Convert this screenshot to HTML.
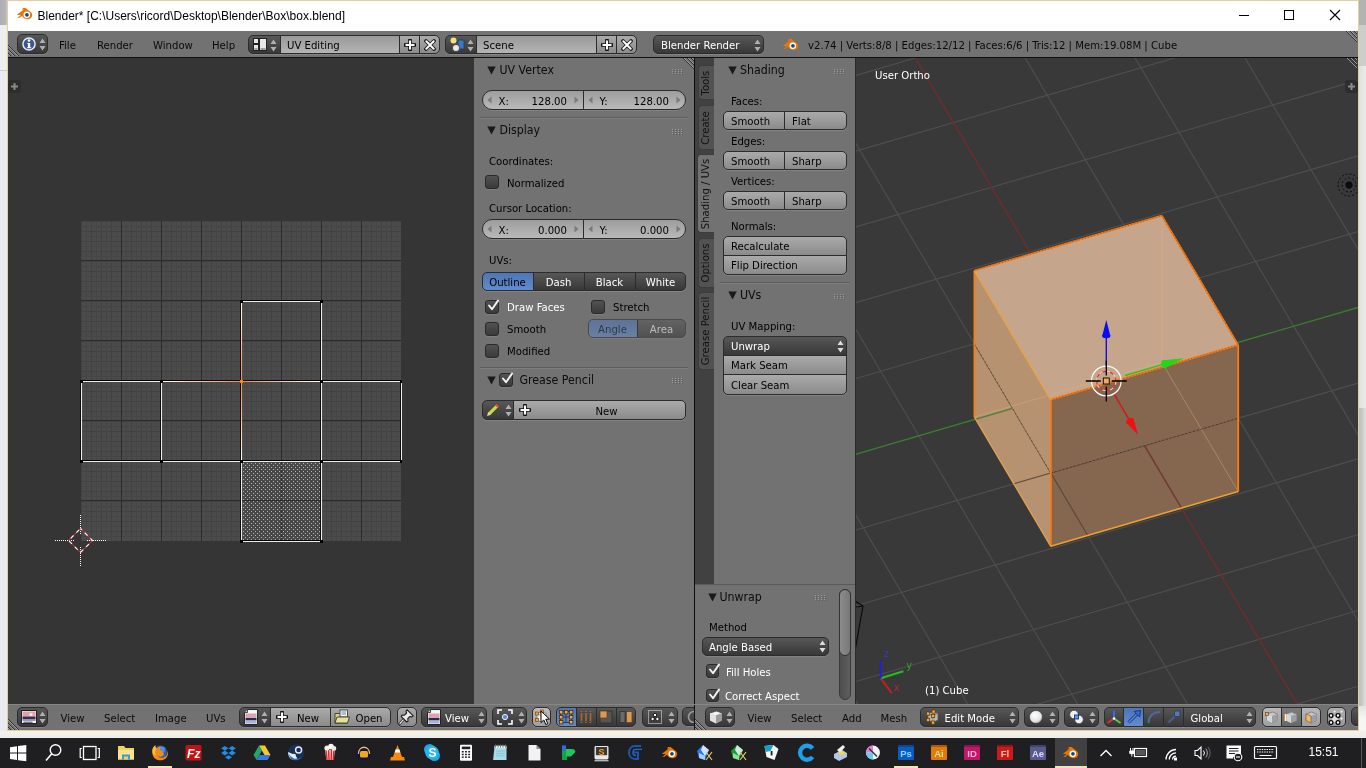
<!DOCTYPE html>
<html><head><meta charset="utf-8"><title>Blender</title>
<style>
*{box-sizing:border-box;margin:0;padding:0}
html,body{width:1366px;height:768px;overflow:hidden}
body{position:relative;background:#f2f2f2;font-family:"DejaVu Sans Condensed","DejaVu Sans","Liberation Sans",sans-serif;font-size:11.25px;font-stretch:condensed;color:#000}
#root{position:absolute;left:0;top:0;width:1366px;height:768px;will-change:transform}
.a,.t,.w,svg{position:absolute}
.t{white-space:nowrap;line-height:1}
.w{border:1px solid #2c2c2c;white-space:nowrap;overflow:hidden;box-shadow:0 1px 0 rgba(255,255,255,.12)}
.tool{background:linear-gradient(#aaa,#8b8b8b)}
.num{background:linear-gradient(#9d9d9d,#b9b9b9)}
.txt{background:linear-gradient(#999,#b4b4b4)}
.menu{background:linear-gradient(#575757,#383838);color:#fff}
.sel{background:linear-gradient(#4d76b8,#618bcd)}
.dis{opacity:.55}
.chk{border-radius:3px;background:linear-gradient(#525252,#3a3a3a);border:1px solid #2a2a2a;box-shadow:0 1px 0 rgba(255,255,255,.1)}
.hd{background:#727272}
.seg{font-family:"Liberation Sans",sans-serif}
</style></head>
<body>
<div id="root">
<div class="a" style="left:0px;top:0px;width:8px;height:25px;background:linear-gradient(90deg,#adadb2,#b6b6ba 70%,#d6d6d6);"></div>
<div class="a" style="left:0px;top:25px;width:8px;height:46px;background:#eeeeee;"></div>
<div class="a" style="left:0px;top:71px;width:8px;height:667px;background:#e9ebf0;"></div>
<div class="a" style="left:0px;top:70px;width:7px;height:1px;background:#cfcfcf;"></div>
<div class="a" style="left:1358px;top:0px;width:8px;height:25px;background:#b3b3b3;"></div>
<div class="a" style="left:1358px;top:25px;width:8px;height:41px;background:#cdcdcd;"></div>
<div class="a" style="left:1358px;top:66px;width:8px;height:342px;background:linear-gradient(90deg,#dedede,#ebebeb);"></div>
<div class="a" style="left:1358px;top:408px;width:8px;height:298px;background:linear-gradient(90deg,#bcbcbc,#c6c6c6 45%,#e2e2e2);"></div>
<div class="a" style="left:1358px;top:706px;width:8px;height:32px;background:linear-gradient(#e4e4e4,#f6f6f6 40%);"></div>
<div class="a" style="left:0px;top:731px;width:1366px;height:7px;background:linear-gradient(#f4f1e8,#ededed);"></div>
<div class="a" style="left:7px;top:0px;width:1352px;height:731px;background:#e3cf9d;"></div>
<div class="a" style="left:8px;top:1px;width:1350px;height:30px;background:#fff;"></div>
<div class="a" style="left:8px;top:31px;width:1350px;height:699px;background:#727272;"></div>
<svg style="left:15.6px;top:7.3px;" width="17" height="13.8125" viewBox="0 0 16 13"><path d="M1 7.2 L7.2 2.3 L5.6 2.3 L6.6 1 L9 1 L14.3 5.2 C15.6 6.4 15.6 8.6 14.3 10 C12.6 11.8 9 11.9 7 10.2 C6.3 9.6 5.9 8.9 5.8 8.2 L3.2 10.2 L1.2 10.2 L4.6 7.5 L1 7.5Z" fill="#ea7600"/><circle cx="10.2" cy="7.4" r="3.1" fill="#fff"/><circle cx="10.3" cy="7.4" r="1.75" fill="#0d4a8c"/></svg>
<span class="t seg" style="left:37.5px;top:9.8px;font-size:12px;color:#000;letter-spacing:0.0px">Blender* [C:\Users\ricord\Desktop\Blender\Box\box.blend]</span>
<svg style="left:1236px;top:8px;" width="110" height="16" viewBox="0 0 110 16"><path d="M3 7.5 H13" stroke="#000" stroke-width="1"/><rect x="48.5" y="2.5" width="9" height="9" fill="none" stroke="#000" stroke-width="1"/><path d="M94 2 L104 12 M104 2 L94 12" stroke="#000" stroke-width="1.1"/></svg>
<div class="a" style="left:8px;top:31px;width:1350px;height:26px;background:#727272;"></div>
<div class="a" style="left:8px;top:57px;width:1350px;height:1px;background:#0f0f0f;"></div>
<svg style="left:8px;top:43px;" width="13" height="13" viewBox="0 0 13 13"><path d="M0 2 L11 13" stroke="#333" stroke-width="1"/><path d="M0 3 L10 13" stroke="#9a9a9a" stroke-width="1"/><path d="M0 6 L7 13" stroke="#333" stroke-width="1"/><path d="M0 7 L6 13" stroke="#9a9a9a" stroke-width="1"/><path d="M0 10 L3 13" stroke="#333" stroke-width="1"/><path d="M0 11 L2 13" stroke="#9a9a9a" stroke-width="1"/></svg>
<svg style="left:1344px;top:31px;" width="13" height="13" viewBox="0 0 13 13"><path d="M2 0 L13 11" stroke="#333" stroke-width="1"/><path d="M3 0 L13 10" stroke="#9a9a9a" stroke-width="1"/><path d="M6 0 L13 7" stroke="#333" stroke-width="1"/><path d="M7 0 L13 6" stroke="#9a9a9a" stroke-width="1"/><path d="M10 0 L13 3" stroke="#333" stroke-width="1"/><path d="M11 0 L13 2" stroke="#9a9a9a" stroke-width="1"/></svg>
<div class="w menu" style="left:17px;top:34px;width:31px;height:20px;border-radius:5px;"></div>
<svg style="left:21px;top:36px;" width="16" height="16" viewBox="0 0 16 16"><circle cx="8" cy="8" r="6.1" fill="#3a5896" stroke="#e4eaf6" stroke-width="1.5"/><circle cx="8" cy="4.6" r="1.3" fill="#fff"/><path d="M6.3 7 H9.2 V11.3 H10.2 V12.3 H6 V11.3 H7 V8 H6.3Z" fill="#fff"/></svg>
<svg style="left:39px;top:38px;" width="7" height="13" viewBox="0 0 7 13"><path d="M3.5 0.5 L6.5 5 L0.5 5Z M3.5 12.5 L6.5 8 L0.5 8Z" fill="#b0b0b0"/></svg>
<span class="t " style="left:59px;top:39.8px;font-size:11.25px;color:#0a0a0a;">File</span>
<span class="t " style="left:97px;top:39.8px;font-size:11.25px;color:#0a0a0a;">Render</span>
<span class="t " style="left:153px;top:39.8px;font-size:11.25px;color:#0a0a0a;">Window</span>
<span class="t " style="left:212px;top:39.8px;font-size:11.25px;color:#0a0a0a;">Help</span>
<div class="w menu" style="left:248px;top:34.5px;width:33px;height:19.5px;border-radius:5px 0 0 5px;"></div>
<div class="w txt" style="left:280px;top:34.5px;width:120px;height:19.5px;border-radius:0;"></div>
<div class="w tool" style="left:399px;top:34.5px;width:21px;height:19.5px;border-radius:0;"></div>
<div class="w tool" style="left:419px;top:34.5px;width:21px;height:19.5px;border-radius:0 5px 5px 0;"></div>
<svg style="left:253px;top:38px;" width="14" height="13" viewBox="0 0 14 13"><rect x="0.5" y="0.5" width="5" height="5" fill="#e8e8e8" stroke="#222"/><rect x="0.5" y="6.5" width="5" height="6" fill="#e8e8e8" stroke="#222"/><rect x="6.5" y="0.5" width="7" height="12" fill="#e8e8e8" stroke="#222"/><rect x="1.5" y="10.5" width="3" height="1" fill="#555"/><rect x="7.5" y="10.5" width="5" height="1" fill="#555"/></svg>
<svg style="left:270px;top:38.5px;" width="7" height="13" viewBox="0 0 7 13"><path d="M3.5 0.5 L6.5 5 L0.5 5Z M3.5 12.5 L6.5 8 L0.5 8Z" fill="#b0b0b0"/></svg>
<span class="t " style="left:287px;top:39.8px;font-size:11.25px;color:#000;">UV Editing</span>
<svg style="left:404px;top:38.5px;" width="12" height="12" viewBox="0 0 12 12"><path d="M6 1 V11 M1 6 H11" stroke="#111" stroke-width="3.6" stroke-linecap="square"/><path d="M6 1.5 V10.5 M1.5 6 H10.5" stroke="#fff" stroke-width="2"/></svg>
<svg style="left:423.5px;top:38.5px;" width="12" height="12" viewBox="0 0 12 12"><path d="M2 2 L10 10 M10 2 L2 10" stroke="#111" stroke-width="3.6" stroke-linecap="round"/><path d="M2.3 2.3 L9.7 9.7 M9.7 2.3 L2.3 9.7" stroke="#fff" stroke-width="2" stroke-linecap="round"/></svg>
<div class="w menu" style="left:445px;top:34.5px;width:32px;height:19.5px;border-radius:5px 0 0 5px;"></div>
<div class="w txt" style="left:476px;top:34.5px;width:121px;height:19.5px;border-radius:0;"></div>
<div class="w tool" style="left:596px;top:34.5px;width:21px;height:19.5px;border-radius:0;"></div>
<div class="w tool" style="left:616px;top:34.5px;width:21px;height:19.5px;border-radius:0 5px 5px 0;"></div>
<svg style="left:450px;top:37px;" width="16" height="16" viewBox="0 0 16 16"><circle cx="3.5" cy="3.5" r="3" fill="#f3e27a"/><rect x="8" y="3" width="6" height="9" rx="1" fill="#3f76c4" stroke="#1d3a68" stroke-width=".8"/><circle cx="6" cy="11" r="3.6" fill="#e9e9e9" stroke="#333" stroke-width=".8"/></svg>
<svg style="left:467px;top:38.5px;" width="7" height="13" viewBox="0 0 7 13"><path d="M3.5 0.5 L6.5 5 L0.5 5Z M3.5 12.5 L6.5 8 L0.5 8Z" fill="#b0b0b0"/></svg>
<span class="t " style="left:483px;top:39.8px;font-size:11.25px;color:#000;">Scene</span>
<svg style="left:601px;top:38.5px;" width="12" height="12" viewBox="0 0 12 12"><path d="M6 1 V11 M1 6 H11" stroke="#111" stroke-width="3.6" stroke-linecap="square"/><path d="M6 1.5 V10.5 M1.5 6 H10.5" stroke="#fff" stroke-width="2"/></svg>
<svg style="left:620.5px;top:38.5px;" width="12" height="12" viewBox="0 0 12 12"><path d="M2 2 L10 10 M10 2 L2 10" stroke="#111" stroke-width="3.6" stroke-linecap="round"/><path d="M2.3 2.3 L9.7 9.7 M9.7 2.3 L2.3 9.7" stroke="#fff" stroke-width="2" stroke-linecap="round"/></svg>
<div class="w menu" style="left:653px;top:34.5px;width:111px;height:19.5px;border-radius:5px;"></div>
<span class="t " style="left:661px;top:39.8px;font-size:11.25px;color:#fff;">Blender Render</span>
<svg style="left:754px;top:38.5px;" width="7" height="13" viewBox="0 0 7 13"><path d="M3.5 0.5 L6.5 5 L0.5 5Z M3.5 12.5 L6.5 8 L0.5 8Z" fill="#b0b0b0"/></svg>
<svg style="left:782px;top:37.5px;" width="17" height="13.8125" viewBox="0 0 16 13"><path d="M1 7.2 L7.2 2.3 L5.6 2.3 L6.6 1 L9 1 L14.3 5.2 C15.6 6.4 15.6 8.6 14.3 10 C12.6 11.8 9 11.9 7 10.2 C6.3 9.6 5.9 8.9 5.8 8.2 L3.2 10.2 L1.2 10.2 L4.6 7.5 L1 7.5Z" fill="#ea7600"/><circle cx="10.2" cy="7.4" r="3.1" fill="#fff"/><circle cx="10.3" cy="7.4" r="1.75" fill="#0d4a8c"/></svg>
<span class="t " style="left:808px;top:39.8px;font-size:11.25px;color:#0a0a0a;">v2.74 | Verts:8/8 | Edges:12/12 | Faces:6/6 | Tris:12 | Mem:19.08M | Cube</span>
<div class="a" style="left:8px;top:58px;width:466px;height:646px;background:#353535;"></div>
<div class="a" style="left:8px;top:80px;width:13px;height:13px;background:#2c2c2c;border-radius:3px;opacity:.9"></div>
<svg style="left:10px;top:82px;" width="9" height="9" viewBox="0 0 9 9"><path d="M4.5 1 V8 M1 4.5 H8" stroke="#8a8a8a" stroke-width="2"/></svg>
<svg style="left:81px;top:221px;" width="320" height="320" viewBox="0 0 320 320"><defs><pattern id="fine" width="10" height="10" patternUnits="userSpaceOnUse"><rect width="10" height="10" fill="#4b4b4b"/><path d="M0 .5 H10 M.5 0 V10" stroke="#424242" stroke-width="1"/><path d="M5.5 0 V10 M0 5.5 H10" stroke="#464646" stroke-width="1"/></pattern><pattern id="stip" width="4" height="4" patternUnits="userSpaceOnUse"><rect x="0" y="0" width="1" height="1" fill="#b4b4b4"/><rect x="2" y="2" width="1" height="1" fill="#b4b4b4"/></pattern></defs><rect x="0" y="0" width="320" height="320" fill="url(#fine)"/><rect x="40" y="0" width="1" height="320" fill="#2b2b2b"/><rect x="0" y="39" width="320" height="1" fill="#2b2b2b"/><rect x="80" y="0" width="1" height="320" fill="#2b2b2b"/><rect x="0" y="79" width="320" height="1" fill="#2b2b2b"/><rect x="120" y="0" width="1" height="320" fill="#2b2b2b"/><rect x="0" y="119" width="320" height="1" fill="#2b2b2b"/><rect x="160" y="0" width="1" height="320" fill="#2b2b2b"/><rect x="0" y="159" width="320" height="1" fill="#2b2b2b"/><rect x="200" y="0" width="1" height="320" fill="#2b2b2b"/><rect x="0" y="199" width="320" height="1" fill="#2b2b2b"/><rect x="240" y="0" width="1" height="320" fill="#2b2b2b"/><rect x="0" y="239" width="320" height="1" fill="#2b2b2b"/><rect x="280" y="0" width="1" height="320" fill="#2b2b2b"/><rect x="0" y="279" width="320" height="1" fill="#2b2b2b"/></svg>
<svg style="left:80px;top:220px;" width="322" height="323" viewBox="-1 -1 322 323"><rect x="161" y="241" width="80" height="80" fill="url(#stip)"/><path d="M160.0 80.0 L240.0 80.0" stroke="#000" stroke-width="2" stroke-linecap="square"/><path d="M160.0 80.0 L160.0 320.0" stroke="#000" stroke-width="2" stroke-linecap="square"/><path d="M240.0 80.0 L240.0 320.0" stroke="#000" stroke-width="2" stroke-linecap="square"/><path d="M0.0 160.0 L320.0 160.0" stroke="#000" stroke-width="2" stroke-linecap="square"/><path d="M0.0 240.0 L320.0 240.0" stroke="#000" stroke-width="2" stroke-linecap="square"/><path d="M0.0 160.0 L0.0 240.0" stroke="#000" stroke-width="2" stroke-linecap="square"/><path d="M80.0 160.0 L80.0 240.0" stroke="#000" stroke-width="2" stroke-linecap="square"/><path d="M320.0 160.0 L320.0 240.0" stroke="#000" stroke-width="2" stroke-linecap="square"/><path d="M160.0 320.0 L240.0 320.0" stroke="#000" stroke-width="2" stroke-linecap="square"/><path d="M160.5 80.5 L240.5 80.5" stroke="#ececec" stroke-width="1.1"/><path d="M160.5 80.5 L160.5 320.5" stroke="#ececec" stroke-width="1.1"/><path d="M240.5 80.5 L240.5 320.5" stroke="#ececec" stroke-width="1.1"/><path d="M0.5 160.5 L320.5 160.5" stroke="#ececec" stroke-width="1.1"/><path d="M0.5 240.5 L320.5 240.5" stroke="#ececec" stroke-width="1.1"/><path d="M0.5 160.5 L0.5 240.5" stroke="#ececec" stroke-width="1.1"/><path d="M80.5 160.5 L80.5 240.5" stroke="#ececec" stroke-width="1.1"/><path d="M320.5 160.5 L320.5 240.5" stroke="#ececec" stroke-width="1.1"/><path d="M160.5 320.5 L240.5 320.5" stroke="#ececec" stroke-width="1.1"/><defs><linearGradient id="oL" x1="1" x2="0"><stop offset="0" stop-color="#ff8a1a"/><stop offset="1" stop-color="#fff"/></linearGradient><linearGradient id="oR" x1="0" x2="1"><stop offset="0" stop-color="#ff8a1a"/><stop offset="1" stop-color="#fff"/></linearGradient><linearGradient id="oU" x1="0" x2="0" y1="1" y2="0"><stop offset="0" stop-color="#ff8a1a"/><stop offset="1" stop-color="#fff"/></linearGradient><linearGradient id="oD" x1="0" x2="0" y1="0" y2="1"><stop offset="0" stop-color="#ff8a1a"/><stop offset="1" stop-color="#fff"/></linearGradient></defs><rect x="80" y="160" width="80" height="1" fill="url(#oL)"/><rect x="161" y="160" width="80" height="1" fill="url(#oR)"/><rect x="160" y="80" width="1" height="80" fill="url(#oU)"/><rect x="160" y="161" width="1" height="80" fill="url(#oD)"/><rect x="159" y="79" width="3" height="3" fill="#000"/><rect x="239" y="79" width="3" height="3" fill="#000"/><rect x="-1" y="159" width="3" height="3" fill="#000"/><rect x="79" y="159" width="3" height="3" fill="#000"/><rect x="239" y="159" width="3" height="3" fill="#000"/><rect x="319" y="159" width="3" height="3" fill="#000"/><rect x="-1" y="239" width="3" height="3" fill="#000"/><rect x="79" y="239" width="3" height="3" fill="#000"/><rect x="159" y="239" width="3" height="3" fill="#000"/><rect x="239" y="239" width="3" height="3" fill="#000"/><rect x="319" y="239" width="3" height="3" fill="#000"/><rect x="159" y="319" width="3" height="3" fill="#000"/><rect x="239" y="319" width="3" height="3" fill="#000"/><rect x="159" y="159" width="3" height="3" fill="#ff8500"/></svg>
<svg style="left:55px;top:515px;" width="51" height="51" viewBox="0 0 51 51"><path d="M25.5 0 V19 M25.5 32 V51 M0 25.5 H19 M32 25.5 H51" stroke="#fff" stroke-width="1" stroke-dasharray="1 1"/><path d="M25.5 13.5 L37.5 25.5 L25.5 37.5 L13.5 25.5Z" fill="none" stroke="#b03040" stroke-width="1.1"/><path d="M25.5 13.5 L37.5 25.5 L25.5 37.5 L13.5 25.5Z" fill="none" stroke="#fff" stroke-width="1.1" stroke-dasharray="4 4" stroke-dashoffset="2"/></svg>
<div class="a" style="left:474px;top:58px;width:220px;height:646px;background:#727272;"></div>
<div class="a" style="left:694px;top:58px;width:1px;height:646px;background:#0c0c0c;"></div>
<svg style="left:681px;top:58px;" width="13" height="13" viewBox="0 0 13 13"><path d="M2 0 L13 11" stroke="#333" stroke-width="1"/><path d="M3 0 L13 10" stroke="#9a9a9a" stroke-width="1"/><path d="M6 0 L13 7" stroke="#333" stroke-width="1"/><path d="M7 0 L13 6" stroke="#9a9a9a" stroke-width="1"/><path d="M10 0 L13 3" stroke="#333" stroke-width="1"/><path d="M11 0 L13 2" stroke="#9a9a9a" stroke-width="1"/></svg>
<svg style="left:487px;top:66px;" width="9" height="9" viewBox="0 0 9 9"><path d="M0.3 0.5 L8.7 0.5 L4.5 8.5Z" fill="#1a1a1a"/></svg>
<span class="t " style="left:499.5px;top:64.1px;font-size:12.25px;color:#0c0c0c;">UV Vertex</span>
<svg style="left:672px;top:69px;" width="12" height="7" viewBox="0 0 12 7"><rect x="0" y="0" width="1" height="1" fill="#9c9c9c"/><rect x="1" y="1" width="1" height="1" fill="#555" opacity=".6"/><rect x="3" y="0" width="1" height="1" fill="#9c9c9c"/><rect x="4" y="1" width="1" height="1" fill="#555" opacity=".6"/><rect x="6" y="0" width="1" height="1" fill="#9c9c9c"/><rect x="7" y="1" width="1" height="1" fill="#555" opacity=".6"/><rect x="9" y="0" width="1" height="1" fill="#9c9c9c"/><rect x="10" y="1" width="1" height="1" fill="#555" opacity=".6"/><rect x="0" y="2" width="1" height="1" fill="#9c9c9c"/><rect x="1" y="3" width="1" height="1" fill="#555" opacity=".6"/><rect x="3" y="2" width="1" height="1" fill="#9c9c9c"/><rect x="4" y="3" width="1" height="1" fill="#555" opacity=".6"/><rect x="6" y="2" width="1" height="1" fill="#9c9c9c"/><rect x="7" y="3" width="1" height="1" fill="#555" opacity=".6"/><rect x="9" y="2" width="1" height="1" fill="#9c9c9c"/><rect x="10" y="3" width="1" height="1" fill="#555" opacity=".6"/><rect x="0" y="4" width="1" height="1" fill="#9c9c9c"/><rect x="1" y="5" width="1" height="1" fill="#555" opacity=".6"/><rect x="3" y="4" width="1" height="1" fill="#9c9c9c"/><rect x="4" y="5" width="1" height="1" fill="#555" opacity=".6"/><rect x="6" y="4" width="1" height="1" fill="#9c9c9c"/><rect x="7" y="5" width="1" height="1" fill="#555" opacity=".6"/><rect x="9" y="4" width="1" height="1" fill="#9c9c9c"/><rect x="10" y="5" width="1" height="1" fill="#555" opacity=".6"/></svg>
<div class="w num" style="left:482px;top:90px;width:102px;height:20px;border-radius:10px 0 0 10px;"></div>
<div class="w num" style="left:583px;top:90px;width:103px;height:20px;border-radius:0 10px 10px 0;"></div>
<svg style="left:487px;top:96px;" width="5" height="8" viewBox="0 0 5 8"><path d="M4.5 .5 L.5 4 L4.5 7.5Z" fill="#7a7a7a"/></svg>
<svg style="left:574px;top:96px;" width="5" height="8" viewBox="0 0 5 8"><path d="M.5 .5 L4.5 4 L.5 7.5Z" fill="#7a7a7a"/></svg>
<span class="t " style="left:498.5px;top:96.1px;font-size:11.25px;color:#000;">X:</span>
<span class="t" style="right:799px;top:96.3px;font-size:11.25px">128.00</span>
<svg style="left:588px;top:96px;" width="5" height="8" viewBox="0 0 5 8"><path d="M4.5 .5 L.5 4 L4.5 7.5Z" fill="#7a7a7a"/></svg>
<svg style="left:676px;top:96px;" width="5" height="8" viewBox="0 0 5 8"><path d="M.5 .5 L4.5 4 L.5 7.5Z" fill="#7a7a7a"/></svg>
<span class="t " style="left:599.5px;top:96.1px;font-size:11.25px;color:#000;">Y:</span>
<span class="t" style="right:697px;top:96.3px;font-size:11.25px">128.00</span>
<div class="a" style="left:480px;top:117px;width:208px;height:1px;background:#5c5c5c;"></div>
<div class="a" style="left:480px;top:118px;width:208px;height:1px;background:#7e7e7e;"></div>
<svg style="left:487px;top:126px;" width="9" height="9" viewBox="0 0 9 9"><path d="M0.3 0.5 L8.7 0.5 L4.5 8.5Z" fill="#1a1a1a"/></svg>
<span class="t " style="left:499.5px;top:124.1px;font-size:12.25px;color:#0c0c0c;">Display</span>
<svg style="left:672px;top:129px;" width="12" height="7" viewBox="0 0 12 7"><rect x="0" y="0" width="1" height="1" fill="#9c9c9c"/><rect x="1" y="1" width="1" height="1" fill="#555" opacity=".6"/><rect x="3" y="0" width="1" height="1" fill="#9c9c9c"/><rect x="4" y="1" width="1" height="1" fill="#555" opacity=".6"/><rect x="6" y="0" width="1" height="1" fill="#9c9c9c"/><rect x="7" y="1" width="1" height="1" fill="#555" opacity=".6"/><rect x="9" y="0" width="1" height="1" fill="#9c9c9c"/><rect x="10" y="1" width="1" height="1" fill="#555" opacity=".6"/><rect x="0" y="2" width="1" height="1" fill="#9c9c9c"/><rect x="1" y="3" width="1" height="1" fill="#555" opacity=".6"/><rect x="3" y="2" width="1" height="1" fill="#9c9c9c"/><rect x="4" y="3" width="1" height="1" fill="#555" opacity=".6"/><rect x="6" y="2" width="1" height="1" fill="#9c9c9c"/><rect x="7" y="3" width="1" height="1" fill="#555" opacity=".6"/><rect x="9" y="2" width="1" height="1" fill="#9c9c9c"/><rect x="10" y="3" width="1" height="1" fill="#555" opacity=".6"/><rect x="0" y="4" width="1" height="1" fill="#9c9c9c"/><rect x="1" y="5" width="1" height="1" fill="#555" opacity=".6"/><rect x="3" y="4" width="1" height="1" fill="#9c9c9c"/><rect x="4" y="5" width="1" height="1" fill="#555" opacity=".6"/><rect x="6" y="4" width="1" height="1" fill="#9c9c9c"/><rect x="7" y="5" width="1" height="1" fill="#555" opacity=".6"/><rect x="9" y="4" width="1" height="1" fill="#9c9c9c"/><rect x="10" y="5" width="1" height="1" fill="#555" opacity=".6"/></svg>
<span class="t " style="left:489px;top:156.1px;font-size:11.25px;color:#000;">Coordinates:</span>
<div class="a chk" style="left:485px;top:175px;width:14px;height:14px"></div>
<span class="t " style="left:507px;top:178.1px;font-size:11.25px;color:#000;">Normalized</span>
<span class="t " style="left:489px;top:203.1px;font-size:11.25px;color:#000;">Cursor Location:</span>
<div class="w num" style="left:482px;top:218.7px;width:102px;height:20px;border-radius:10px 0 0 10px;"></div>
<div class="w num" style="left:583px;top:218.7px;width:103px;height:20px;border-radius:0 10px 10px 0;"></div>
<svg style="left:487px;top:224.7px;" width="5" height="8" viewBox="0 0 5 8"><path d="M4.5 .5 L.5 4 L4.5 7.5Z" fill="#7a7a7a"/></svg>
<svg style="left:574px;top:224.7px;" width="5" height="8" viewBox="0 0 5 8"><path d="M.5 .5 L4.5 4 L.5 7.5Z" fill="#7a7a7a"/></svg>
<span class="t " style="left:498.5px;top:224.8px;font-size:11.25px;color:#000;">X:</span>
<span class="t" style="right:799px;top:225.0px;font-size:11.25px">0.000</span>
<svg style="left:588px;top:224.7px;" width="5" height="8" viewBox="0 0 5 8"><path d="M4.5 .5 L.5 4 L4.5 7.5Z" fill="#7a7a7a"/></svg>
<svg style="left:676px;top:224.7px;" width="5" height="8" viewBox="0 0 5 8"><path d="M.5 .5 L4.5 4 L.5 7.5Z" fill="#7a7a7a"/></svg>
<span class="t " style="left:599.5px;top:224.8px;font-size:11.25px;color:#000;">Y:</span>
<span class="t" style="right:697px;top:225.0px;font-size:11.25px">0.000</span>
<span class="t " style="left:489px;top:255.1px;font-size:11.25px;color:#000;">UVs:</span>
<div class="w menu sel" style="left:482px;top:272px;width:52px;height:19px;border-radius:5px 0 0 5px;"></div>
<span class="t" style="left:482px;width:51px;text-align:center;top:276.5px;color:#000">Outline</span>
<div class="w menu" style="left:533px;top:272px;width:52px;height:19px;border-radius:0;"></div>
<span class="t" style="left:533px;width:51px;text-align:center;top:276.5px;color:#fff">Dash</span>
<div class="w menu" style="left:584px;top:272px;width:52px;height:19px;border-radius:0;"></div>
<span class="t" style="left:584px;width:51px;text-align:center;top:276.5px;color:#fff">Black</span>
<div class="w menu" style="left:635px;top:272px;width:51px;height:19px;border-radius:0 5px 5px 0;"></div>
<span class="t" style="left:635px;width:51px;text-align:center;top:276.5px;color:#fff">White</span>
<div class="a chk" style="left:485px;top:300px;width:14px;height:14px"></div>
<svg style="left:486px;top:298px;" width="16" height="16" viewBox="0 0 16 16"><path d="M3 7.5 L6 11.2 L12 2.6" fill="none" stroke="#f4f4f4" stroke-width="1.9" stroke-linecap="round" stroke-linejoin="round"/></svg>
<span class="t " style="left:507px;top:301.9px;font-size:11.25px;color:#fff;">Draw Faces</span>
<div class="a chk" style="left:591px;top:300px;width:14px;height:14px"></div>
<span class="t " style="left:613px;top:301.9px;font-size:11.25px;color:#000;">Stretch</span>
<div class="a chk" style="left:485px;top:322px;width:14px;height:14px"></div>
<span class="t " style="left:507px;top:323.9px;font-size:11.25px;color:#000;">Smooth</span>
<div class="w menu sel dis" style="left:588px;top:319px;width:50px;height:19px;border-radius:5px 0 0 5px;"></div>
<div class="w menu dis" style="left:637px;top:319px;width:49px;height:19px;border-radius:0 5px 5px 0;"></div>
<span class="t" style="left:588px;width:49px;text-align:center;top:323.5px;color:#2a2a2a;opacity:.8">Angle</span>
<span class="t" style="left:637px;width:49px;text-align:center;top:323.5px;color:#bdbdbd">Area</span>
<div class="a chk" style="left:485px;top:344px;width:14px;height:14px"></div>
<span class="t " style="left:507px;top:345.9px;font-size:11.25px;color:#000;">Modified</span>
<div class="a" style="left:480px;top:367px;width:208px;height:1px;background:#5c5c5c;"></div>
<div class="a" style="left:480px;top:368px;width:208px;height:1px;background:#7e7e7e;"></div>
<svg style="left:487px;top:376px;" width="9" height="9" viewBox="0 0 9 9"><path d="M0.3 0.5 L8.7 0.5 L4.5 8.5Z" fill="#1a1a1a"/></svg>
<div class="a chk" style="left:499px;top:373px;width:14px;height:14px"></div>
<svg style="left:500px;top:371px;" width="16" height="16" viewBox="0 0 16 16"><path d="M3 7.5 L6 11.2 L12 2.6" fill="none" stroke="#f4f4f4" stroke-width="1.9" stroke-linecap="round" stroke-linejoin="round"/></svg>
<span class="t " style="left:519.5px;top:374.2px;font-size:12.25px;color:#0c0c0c;">Grease Pencil</span>
<svg style="left:672px;top:377.5px;" width="12" height="7" viewBox="0 0 12 7"><rect x="0" y="0" width="1" height="1" fill="#9c9c9c"/><rect x="1" y="1" width="1" height="1" fill="#555" opacity=".6"/><rect x="3" y="0" width="1" height="1" fill="#9c9c9c"/><rect x="4" y="1" width="1" height="1" fill="#555" opacity=".6"/><rect x="6" y="0" width="1" height="1" fill="#9c9c9c"/><rect x="7" y="1" width="1" height="1" fill="#555" opacity=".6"/><rect x="9" y="0" width="1" height="1" fill="#9c9c9c"/><rect x="10" y="1" width="1" height="1" fill="#555" opacity=".6"/><rect x="0" y="2" width="1" height="1" fill="#9c9c9c"/><rect x="1" y="3" width="1" height="1" fill="#555" opacity=".6"/><rect x="3" y="2" width="1" height="1" fill="#9c9c9c"/><rect x="4" y="3" width="1" height="1" fill="#555" opacity=".6"/><rect x="6" y="2" width="1" height="1" fill="#9c9c9c"/><rect x="7" y="3" width="1" height="1" fill="#555" opacity=".6"/><rect x="9" y="2" width="1" height="1" fill="#9c9c9c"/><rect x="10" y="3" width="1" height="1" fill="#555" opacity=".6"/><rect x="0" y="4" width="1" height="1" fill="#9c9c9c"/><rect x="1" y="5" width="1" height="1" fill="#555" opacity=".6"/><rect x="3" y="4" width="1" height="1" fill="#9c9c9c"/><rect x="4" y="5" width="1" height="1" fill="#555" opacity=".6"/><rect x="6" y="4" width="1" height="1" fill="#9c9c9c"/><rect x="7" y="5" width="1" height="1" fill="#555" opacity=".6"/><rect x="9" y="4" width="1" height="1" fill="#9c9c9c"/><rect x="10" y="5" width="1" height="1" fill="#555" opacity=".6"/></svg>
<div class="w menu" style="left:482px;top:400px;width:32px;height:19.5px;border-radius:5px 0 0 5px;"></div>
<div class="w tool" style="left:513px;top:400px;width:173px;height:19.5px;border-radius:0 5px 5px 0;"></div>
<svg style="left:485px;top:402px;" width="16" height="16" viewBox="0 0 16 16"><path d="M2 14 L3.2 10 L11.5 1.7 L14.3 4.5 L6 12.8Z" fill="#c9d64a" stroke="#3c3c22" stroke-width=".9"/><path d="M10 3.2 L12.8 6 L14.3 4.5 L11.5 1.7Z" fill="#d6504a"/><path d="M2 14 L3.2 10 L6 12.8Z" fill="#e8d9b0"/></svg>
<svg style="left:504.5px;top:404px;" width="7" height="13" viewBox="0 0 7 13"><path d="M3.5 0.5 L6.5 5 L0.5 5Z M3.5 12.5 L6.5 8 L0.5 8Z" fill="#b0b0b0"/></svg>
<svg style="left:518.5px;top:404px;" width="12" height="12" viewBox="0 0 12 12"><path d="M6 1 V11 M1 6 H11" stroke="#111" stroke-width="3.6" stroke-linecap="square"/><path d="M6 1.5 V10.5 M1.5 6 H10.5" stroke="#fff" stroke-width="2"/></svg>
<span class="t" style="left:513px;width:187px;text-align:center;top:406.0px">New</span>
<div class="a" style="left:695px;top:58px;width:19px;height:527px;background:#414141;"></div>
<div class="a" style="left:714px;top:58px;width:141px;height:527px;background:#727272;"></div>
<div class="a" style="left:698px;top:65px;width:16px;height:35px;background:#525252;border-radius:4px 0 0 4px;border:1px solid #3c3c3c;border-right:0"></div>
<span class="t" style="left:688.0px;top:74.5px;width:35px;height:16px;font-size:11.25px;color:#111;transform:rotate(-90deg);text-align:center;line-height:16px">Tools</span>
<div class="a" style="left:698px;top:105px;width:16px;height:45px;background:#525252;border-radius:4px 0 0 4px;border:1px solid #3c3c3c;border-right:0"></div>
<span class="t" style="left:683.0px;top:119.5px;width:45px;height:16px;font-size:11.25px;color:#111;transform:rotate(-90deg);text-align:center;line-height:16px">Create</span>
<div class="a" style="left:697px;top:154px;width:17px;height:79px;background:#727272;border-radius:4px 0 0 4px;border:1px solid #3c3c3c;border-right:0"></div>
<span class="t" style="left:666.0px;top:185.5px;width:79px;height:16px;font-size:11.25px;color:#111;transform:rotate(-90deg);text-align:center;line-height:16px">Shading / UVs</span>
<div class="a" style="left:698px;top:238px;width:16px;height:50px;background:#525252;border-radius:4px 0 0 4px;border:1px solid #3c3c3c;border-right:0"></div>
<span class="t" style="left:680.5px;top:255.0px;width:50px;height:16px;font-size:11.25px;color:#111;transform:rotate(-90deg);text-align:center;line-height:16px">Options</span>
<div class="a" style="left:698px;top:292px;width:16px;height:78px;background:#525252;border-radius:4px 0 0 4px;border:1px solid #3c3c3c;border-right:0"></div>
<span class="t" style="left:666.5px;top:323.0px;width:78px;height:16px;font-size:11.25px;color:#111;transform:rotate(-90deg);text-align:center;line-height:16px">Grease Pencil</span>
<svg style="left:728px;top:66px;" width="9" height="9" viewBox="0 0 9 9"><path d="M0.3 0.5 L8.7 0.5 L4.5 8.5Z" fill="#1a1a1a"/></svg>
<span class="t " style="left:740px;top:64.1px;font-size:12.25px;color:#0c0c0c;">Shading</span>
<svg style="left:834px;top:69px;" width="12" height="7" viewBox="0 0 12 7"><rect x="0" y="0" width="1" height="1" fill="#9c9c9c"/><rect x="1" y="1" width="1" height="1" fill="#555" opacity=".6"/><rect x="3" y="0" width="1" height="1" fill="#9c9c9c"/><rect x="4" y="1" width="1" height="1" fill="#555" opacity=".6"/><rect x="6" y="0" width="1" height="1" fill="#9c9c9c"/><rect x="7" y="1" width="1" height="1" fill="#555" opacity=".6"/><rect x="9" y="0" width="1" height="1" fill="#9c9c9c"/><rect x="10" y="1" width="1" height="1" fill="#555" opacity=".6"/><rect x="0" y="2" width="1" height="1" fill="#9c9c9c"/><rect x="1" y="3" width="1" height="1" fill="#555" opacity=".6"/><rect x="3" y="2" width="1" height="1" fill="#9c9c9c"/><rect x="4" y="3" width="1" height="1" fill="#555" opacity=".6"/><rect x="6" y="2" width="1" height="1" fill="#9c9c9c"/><rect x="7" y="3" width="1" height="1" fill="#555" opacity=".6"/><rect x="9" y="2" width="1" height="1" fill="#9c9c9c"/><rect x="10" y="3" width="1" height="1" fill="#555" opacity=".6"/><rect x="0" y="4" width="1" height="1" fill="#9c9c9c"/><rect x="1" y="5" width="1" height="1" fill="#555" opacity=".6"/><rect x="3" y="4" width="1" height="1" fill="#9c9c9c"/><rect x="4" y="5" width="1" height="1" fill="#555" opacity=".6"/><rect x="6" y="4" width="1" height="1" fill="#9c9c9c"/><rect x="7" y="5" width="1" height="1" fill="#555" opacity=".6"/><rect x="9" y="4" width="1" height="1" fill="#9c9c9c"/><rect x="10" y="5" width="1" height="1" fill="#555" opacity=".6"/></svg>
<span class="t " style="left:731px;top:96.1px;font-size:11.25px;color:#000;">Faces:</span>
<div class="w tool" style="left:723px;top:110.5px;width:62px;height:19px;border-radius:5px 0 0 5px;"></div>
<div class="w tool" style="left:784px;top:110.5px;width:63px;height:19px;border-radius:0 5px 5px 0;"></div>
<span class="t " style="left:731px;top:115.6px;font-size:11.25px;color:#000;">Smooth</span>
<span class="t " style="left:792px;top:115.6px;font-size:11.25px;color:#000;">Flat</span>
<span class="t " style="left:731px;top:136.1px;font-size:11.25px;color:#000;">Edges:</span>
<div class="w tool" style="left:723px;top:150.5px;width:62px;height:19px;border-radius:5px 0 0 5px;"></div>
<div class="w tool" style="left:784px;top:150.5px;width:63px;height:19px;border-radius:0 5px 5px 0;"></div>
<span class="t " style="left:731px;top:155.6px;font-size:11.25px;color:#000;">Smooth</span>
<span class="t " style="left:792px;top:155.6px;font-size:11.25px;color:#000;">Sharp</span>
<span class="t " style="left:731px;top:176.1px;font-size:11.25px;color:#000;">Vertices:</span>
<div class="w tool" style="left:723px;top:190.5px;width:62px;height:19px;border-radius:5px 0 0 5px;"></div>
<div class="w tool" style="left:784px;top:190.5px;width:63px;height:19px;border-radius:0 5px 5px 0;"></div>
<span class="t " style="left:731px;top:195.6px;font-size:11.25px;color:#000;">Smooth</span>
<span class="t " style="left:792px;top:195.6px;font-size:11.25px;color:#000;">Sharp</span>
<span class="t " style="left:731px;top:221.3px;font-size:11.25px;color:#000;">Normals:</span>
<div class="w tool" style="left:723px;top:236px;width:124px;height:19.5px;border-radius:5px 5px 0 0;"></div>
<span class="t " style="left:731px;top:241.1px;font-size:11.25px;color:#000;">Recalculate</span>
<div class="w tool" style="left:723px;top:254.5px;width:124px;height:20px;border-radius:0 0 5px 5px;"></div>
<span class="t " style="left:731px;top:260.3px;font-size:11.25px;color:#000;">Flip Direction</span>
<div class="a" style="left:720px;top:282px;width:130px;height:1px;background:#5c5c5c;"></div>
<div class="a" style="left:720px;top:283px;width:130px;height:1px;background:#7e7e7e;"></div>
<svg style="left:728px;top:291px;" width="9" height="9" viewBox="0 0 9 9"><path d="M0.3 0.5 L8.7 0.5 L4.5 8.5Z" fill="#1a1a1a"/></svg>
<span class="t " style="left:740px;top:289.0px;font-size:12.25px;color:#0c0c0c;">UVs</span>
<svg style="left:834px;top:294px;" width="12" height="7" viewBox="0 0 12 7"><rect x="0" y="0" width="1" height="1" fill="#9c9c9c"/><rect x="1" y="1" width="1" height="1" fill="#555" opacity=".6"/><rect x="3" y="0" width="1" height="1" fill="#9c9c9c"/><rect x="4" y="1" width="1" height="1" fill="#555" opacity=".6"/><rect x="6" y="0" width="1" height="1" fill="#9c9c9c"/><rect x="7" y="1" width="1" height="1" fill="#555" opacity=".6"/><rect x="9" y="0" width="1" height="1" fill="#9c9c9c"/><rect x="10" y="1" width="1" height="1" fill="#555" opacity=".6"/><rect x="0" y="2" width="1" height="1" fill="#9c9c9c"/><rect x="1" y="3" width="1" height="1" fill="#555" opacity=".6"/><rect x="3" y="2" width="1" height="1" fill="#9c9c9c"/><rect x="4" y="3" width="1" height="1" fill="#555" opacity=".6"/><rect x="6" y="2" width="1" height="1" fill="#9c9c9c"/><rect x="7" y="3" width="1" height="1" fill="#555" opacity=".6"/><rect x="9" y="2" width="1" height="1" fill="#9c9c9c"/><rect x="10" y="3" width="1" height="1" fill="#555" opacity=".6"/><rect x="0" y="4" width="1" height="1" fill="#9c9c9c"/><rect x="1" y="5" width="1" height="1" fill="#555" opacity=".6"/><rect x="3" y="4" width="1" height="1" fill="#9c9c9c"/><rect x="4" y="5" width="1" height="1" fill="#555" opacity=".6"/><rect x="6" y="4" width="1" height="1" fill="#9c9c9c"/><rect x="7" y="5" width="1" height="1" fill="#555" opacity=".6"/><rect x="9" y="4" width="1" height="1" fill="#9c9c9c"/><rect x="10" y="5" width="1" height="1" fill="#555" opacity=".6"/></svg>
<span class="t " style="left:731px;top:320.5px;font-size:11.25px;color:#000;">UV Mapping:</span>
<div class="w menu" style="left:723px;top:336px;width:124px;height:19.5px;border-radius:5px 5px 0 0;"></div>
<span class="t " style="left:731px;top:341.1px;font-size:11.25px;color:#fff;">Unwrap</span>
<svg style="left:837px;top:339.5px;" width="7" height="13" viewBox="0 0 7 13"><path d="M3.5 0.5 L6.5 5 L0.5 5Z M3.5 12.5 L6.5 8 L0.5 8Z" fill="#ddd"/></svg>
<div class="w tool" style="left:723px;top:354.5px;width:124px;height:20.5px;border-radius:0;"></div>
<span class="t " style="left:731px;top:360.3px;font-size:11.25px;color:#000;">Mark Seam</span>
<div class="w tool" style="left:723px;top:374px;width:124px;height:20.5px;border-radius:0 0 5px 5px;"></div>
<span class="t " style="left:731px;top:380.1px;font-size:11.25px;color:#000;">Clear Seam</span>
<div class="a" style="left:695px;top:584px;width:160px;height:120px;background:#727272;"></div>
<div class="a" style="left:695px;top:584px;width:160px;height:1px;background:#5a5a5a;"></div>
<svg style="left:708px;top:592.5px;" width="9" height="9" viewBox="0 0 9 9"><path d="M0.3 0.5 L8.7 0.5 L4.5 8.5Z" fill="#1a1a1a"/></svg>
<span class="t " style="left:719.5px;top:590.6px;font-size:12.25px;color:#0c0c0c;">Unwrap</span>
<svg style="left:815px;top:595px;" width="12" height="7" viewBox="0 0 12 7"><rect x="0" y="0" width="1" height="1" fill="#9c9c9c"/><rect x="1" y="1" width="1" height="1" fill="#555" opacity=".6"/><rect x="3" y="0" width="1" height="1" fill="#9c9c9c"/><rect x="4" y="1" width="1" height="1" fill="#555" opacity=".6"/><rect x="6" y="0" width="1" height="1" fill="#9c9c9c"/><rect x="7" y="1" width="1" height="1" fill="#555" opacity=".6"/><rect x="9" y="0" width="1" height="1" fill="#9c9c9c"/><rect x="10" y="1" width="1" height="1" fill="#555" opacity=".6"/><rect x="0" y="2" width="1" height="1" fill="#9c9c9c"/><rect x="1" y="3" width="1" height="1" fill="#555" opacity=".6"/><rect x="3" y="2" width="1" height="1" fill="#9c9c9c"/><rect x="4" y="3" width="1" height="1" fill="#555" opacity=".6"/><rect x="6" y="2" width="1" height="1" fill="#9c9c9c"/><rect x="7" y="3" width="1" height="1" fill="#555" opacity=".6"/><rect x="9" y="2" width="1" height="1" fill="#9c9c9c"/><rect x="10" y="3" width="1" height="1" fill="#555" opacity=".6"/><rect x="0" y="4" width="1" height="1" fill="#9c9c9c"/><rect x="1" y="5" width="1" height="1" fill="#555" opacity=".6"/><rect x="3" y="4" width="1" height="1" fill="#9c9c9c"/><rect x="4" y="5" width="1" height="1" fill="#555" opacity=".6"/><rect x="6" y="4" width="1" height="1" fill="#9c9c9c"/><rect x="7" y="5" width="1" height="1" fill="#555" opacity=".6"/><rect x="9" y="4" width="1" height="1" fill="#9c9c9c"/><rect x="10" y="5" width="1" height="1" fill="#555" opacity=".6"/></svg>
<div class="a" style="left:839px;top:589px;width:12px;height:111px;background:linear-gradient(90deg,#4e4e4e,#5e5e5e);border-radius:6px;border:1px solid #3a3a3a"></div>
<div class="a" style="left:839px;top:589px;width:12px;height:67px;background:linear-gradient(90deg,#8c8c8c,#787878);border-radius:6px;border:1px solid #333"></div>
<span class="t " style="left:709px;top:622.1px;font-size:11.25px;color:#000;">Method</span>
<div class="w menu" style="left:702px;top:636.5px;width:127px;height:19.5px;border-radius:5px;"></div>
<span class="t " style="left:709px;top:641.9px;font-size:11.25px;color:#fff;">Angle Based</span>
<svg style="left:819px;top:640px;" width="7" height="13" viewBox="0 0 7 13"><path d="M3.5 0.5 L6.5 5 L0.5 5Z M3.5 12.5 L6.5 8 L0.5 8Z" fill="#ddd"/></svg>
<div class="a chk" style="left:705.5px;top:664px;width:13.5px;height:13.5px"></div>
<svg style="left:706.5px;top:662px;" width="16" height="16" viewBox="0 0 16 16"><path d="M3 7.5 L6 11.2 L12 2.6" fill="none" stroke="#f4f4f4" stroke-width="1.9" stroke-linecap="round" stroke-linejoin="round"/></svg>
<span class="t " style="left:726px;top:666.5px;font-size:11.25px;color:#fff;">Fill Holes</span>
<div class="a chk" style="left:705.5px;top:688.5px;width:13.5px;height:13.5px"></div>
<svg style="left:706.5px;top:686.5px;" width="16" height="16" viewBox="0 0 16 16"><path d="M3 7.5 L6 11.2 L12 2.6" fill="none" stroke="#f4f4f4" stroke-width="1.9" stroke-linecap="round" stroke-linejoin="round"/></svg>
<span class="t " style="left:725px;top:690.5px;font-size:11.25px;color:#fff;">Correct Aspect</span>
<svg style="left:855px;top:58px;" width="503" height="646" viewBox="0 0 503 646"><rect width="503" height="646" fill="#393939"/><path d="M-803.9 25.4 L695.3 -413.0" stroke="#4f4f4f" stroke-width="1.1" /><path d="M-803.9 25.4 L-192.7 1059.0" stroke="#4f4f4f" stroke-width="1.1" /><path d="M-765.7 90.0 L733.5 -348.4" stroke="#4f4f4f" stroke-width="1.1" /><path d="M-710.2 -2.0 L-99.0 1031.6" stroke="#4f4f4f" stroke-width="1.1" /><path d="M-727.5 154.6 L771.7 -283.8" stroke="#4f4f4f" stroke-width="1.1" /><path d="M-616.5 -29.4 L-5.3 1004.2" stroke="#4f4f4f" stroke-width="1.1" /><path d="M-689.3 219.2 L809.9 -219.2" stroke="#4f4f4f" stroke-width="1.1" /><path d="M-522.8 -56.8 L88.4 976.8" stroke="#4f4f4f" stroke-width="1.1" /><path d="M-651.1 283.8 L848.1 -154.6" stroke="#4f4f4f" stroke-width="1.1" /><path d="M-429.1 -84.2 L182.1 949.4" stroke="#4f4f4f" stroke-width="1.1" /><path d="M-612.9 348.4 L886.3 -90.0" stroke="#4f4f4f" stroke-width="1.1" /><path d="M-335.4 -111.6 L275.8 922.0" stroke="#4f4f4f" stroke-width="1.1" /><path d="M-574.7 413.0 L924.5 -25.4" stroke="#4f4f4f" stroke-width="1.1" /><path d="M-241.7 -139.0 L369.5 894.6" stroke="#4f4f4f" stroke-width="1.1" /><path d="M-536.5 477.6 L962.7 39.2" stroke="#4f4f4f" stroke-width="1.1" /><path d="M-148.0 -166.4 L463.2 867.2" stroke="#4f4f4f" stroke-width="1.1" /><path d="M-460.1 606.8 L1039.1 168.4" stroke="#4f4f4f" stroke-width="1.1" /><path d="M39.4 -221.2 L650.6 812.4" stroke="#4f4f4f" stroke-width="1.1" /><path d="M-421.9 671.4 L1077.3 233.0" stroke="#4f4f4f" stroke-width="1.1" /><path d="M133.1 -248.6 L744.3 785.0" stroke="#4f4f4f" stroke-width="1.1" /><path d="M-383.7 736.0 L1115.5 297.6" stroke="#4f4f4f" stroke-width="1.1" /><path d="M226.8 -276.0 L838.0 757.6" stroke="#4f4f4f" stroke-width="1.1" /><path d="M-345.5 800.6 L1153.7 362.2" stroke="#4f4f4f" stroke-width="1.1" /><path d="M320.5 -303.4 L931.7 730.2" stroke="#4f4f4f" stroke-width="1.1" /><path d="M-307.3 865.2 L1191.9 426.8" stroke="#4f4f4f" stroke-width="1.1" /><path d="M414.2 -330.8 L1025.4 702.8" stroke="#4f4f4f" stroke-width="1.1" /><path d="M-269.1 929.8 L1230.1 491.4" stroke="#4f4f4f" stroke-width="1.1" /><path d="M507.9 -358.2 L1119.1 675.4" stroke="#4f4f4f" stroke-width="1.1" /><path d="M-230.9 994.4 L1268.3 556.0" stroke="#4f4f4f" stroke-width="1.1" /><path d="M601.6 -385.6 L1212.8 648.0" stroke="#4f4f4f" stroke-width="1.1" /><path d="M-192.7 1059.0 L1306.5 620.6" stroke="#4f4f4f" stroke-width="1.1" /><path d="M695.3 -413.0 L1306.5 620.6" stroke="#4f4f4f" stroke-width="1.1" /><path d="M-54.3 -193.8 L556.9 839.8" stroke="#6e2c2e" stroke-width="1.5" /><path d="M-498.3 542.2 L1000.9 103.8" stroke="#3c7a30" stroke-width="1.4" /><path d="M0 543 L8 548 L-2 604 M0 549 L8 548" stroke="#0a0a0a" stroke-width="1.1" fill="none"/><g transform="translate(494 127)" fill="none" stroke="#0c0c0c"><circle r="3.2" fill="#0c0c0c"/><circle r="7" stroke-dasharray="2 2"/><circle r="11" stroke-dasharray="2 2"/></g><path d="M119.4 212.5 L306.8 157.7 L383.2 286.9 L195.8 341.7Z" fill="#c5a68d" /><path d="M119.4 212.5 L195.8 341.7 L195.8 488.3 L119.4 359.1Z" fill="#b79270" /><path d="M195.8 341.7 L383.2 286.9 L383.2 433.5 L195.8 488.3Z" fill="#856750" /><clipPath id="low"><path d="M119.4 285.8 L195.8 415.0 L195.8 488.3 L119.4 359.1Z M195.8 415.0 L383.2 360.2 L383.2 433.5 L195.8 488.3Z"/></clipPath><g clip-path="url(#low)" opacity=".8"><path d="M-803.9 25.4 L695.3 -413.0" stroke="#4a4038" stroke-width="1.1" /><path d="M-803.9 25.4 L-192.7 1059.0" stroke="#4a4038" stroke-width="1.1" /><path d="M-765.7 90.0 L733.5 -348.4" stroke="#4a4038" stroke-width="1.1" /><path d="M-710.2 -2.0 L-99.0 1031.6" stroke="#4a4038" stroke-width="1.1" /><path d="M-727.5 154.6 L771.7 -283.8" stroke="#4a4038" stroke-width="1.1" /><path d="M-616.5 -29.4 L-5.3 1004.2" stroke="#4a4038" stroke-width="1.1" /><path d="M-689.3 219.2 L809.9 -219.2" stroke="#4a4038" stroke-width="1.1" /><path d="M-522.8 -56.8 L88.4 976.8" stroke="#4a4038" stroke-width="1.1" /><path d="M-651.1 283.8 L848.1 -154.6" stroke="#4a4038" stroke-width="1.1" /><path d="M-429.1 -84.2 L182.1 949.4" stroke="#4a4038" stroke-width="1.1" /><path d="M-612.9 348.4 L886.3 -90.0" stroke="#4a4038" stroke-width="1.1" /><path d="M-335.4 -111.6 L275.8 922.0" stroke="#4a4038" stroke-width="1.1" /><path d="M-574.7 413.0 L924.5 -25.4" stroke="#4a4038" stroke-width="1.1" /><path d="M-241.7 -139.0 L369.5 894.6" stroke="#4a4038" stroke-width="1.1" /><path d="M-536.5 477.6 L962.7 39.2" stroke="#4a4038" stroke-width="1.1" /><path d="M-148.0 -166.4 L463.2 867.2" stroke="#4a4038" stroke-width="1.1" /><path d="M-460.1 606.8 L1039.1 168.4" stroke="#4a4038" stroke-width="1.1" /><path d="M39.4 -221.2 L650.6 812.4" stroke="#4a4038" stroke-width="1.1" /><path d="M-421.9 671.4 L1077.3 233.0" stroke="#4a4038" stroke-width="1.1" /><path d="M133.1 -248.6 L744.3 785.0" stroke="#4a4038" stroke-width="1.1" /><path d="M-383.7 736.0 L1115.5 297.6" stroke="#4a4038" stroke-width="1.1" /><path d="M226.8 -276.0 L838.0 757.6" stroke="#4a4038" stroke-width="1.1" /><path d="M-345.5 800.6 L1153.7 362.2" stroke="#4a4038" stroke-width="1.1" /><path d="M320.5 -303.4 L931.7 730.2" stroke="#4a4038" stroke-width="1.1" /><path d="M-307.3 865.2 L1191.9 426.8" stroke="#4a4038" stroke-width="1.1" /><path d="M414.2 -330.8 L1025.4 702.8" stroke="#4a4038" stroke-width="1.1" /><path d="M-269.1 929.8 L1230.1 491.4" stroke="#4a4038" stroke-width="1.1" /><path d="M507.9 -358.2 L1119.1 675.4" stroke="#4a4038" stroke-width="1.1" /><path d="M-230.9 994.4 L1268.3 556.0" stroke="#4a4038" stroke-width="1.1" /><path d="M601.6 -385.6 L1212.8 648.0" stroke="#4a4038" stroke-width="1.1" /><path d="M-192.7 1059.0 L1306.5 620.6" stroke="#4a4038" stroke-width="1.1" /><path d="M695.3 -413.0 L1306.5 620.6" stroke="#4a4038" stroke-width="1.1" /><path d="M-54.3 -193.8 L556.9 839.8" stroke="#6e2c2e" stroke-width="1.5" /><path d="M-498.3 542.2 L1000.9 103.8" stroke="#3c7a30" stroke-width="1.4" /></g><path d="M195.8 415.0 L383.2 360.2" stroke="#4a3a2e" stroke-width="1" stroke-dasharray="2 2" opacity=".85"/><path d="M119.4 285.8 L195.8 415.0" stroke="#5b4a38" stroke-width="1" stroke-dasharray="2 2" opacity=".85"/><path d="M306.8 157.7 L306.8 304.3" stroke="#e6b070" stroke-width="1" opacity=".4"/><path d="M306.8 304.3 L119.4 359.1" stroke="#e6b070" stroke-width="1" opacity=".4"/><path d="M306.8 304.3 L383.2 433.5" stroke="#e6b070" stroke-width="1" opacity=".4"/><path d="M119.4 212.5 L306.8 157.7" stroke="#ff7a10" stroke-width="1.8" /><path d="M306.8 157.7 L383.2 286.9" stroke="#ff7a10" stroke-width="1.8" /><path d="M383.2 286.9 L195.8 341.7" stroke="#ff7a10" stroke-width="1.8" /><path d="M119.4 212.5 L119.4 359.1" stroke="#ff7a10" stroke-width="1.8" /><path d="M195.8 341.7 L195.8 488.3" stroke="#ff7a10" stroke-width="1.8" /><path d="M383.2 286.9 L383.2 433.5" stroke="#ff7a10" stroke-width="1.8" /><path d="M119.4 212.5 L195.8 341.7" stroke="#e8a24a" stroke-width="1.6" /><path d="M195.8 488.3 L383.2 433.5" stroke="#f0a030" stroke-width="1.6" /><path d="M119.4 359.1 L195.8 488.3" stroke="#e0a050" stroke-width="1.4" /><path d="M119.4 212.5 L306.8 157.7" stroke="#7a3c10" stroke-width="1" stroke-dasharray="1 2.2" opacity=".6"/><path d="M383.2 286.9 L195.8 341.7" stroke="#7a3c10" stroke-width="1" stroke-dasharray="1 2.2" opacity=".6"/><path d="M306.8 157.7 L383.2 286.9" stroke="#7a3c10" stroke-width="1" stroke-dasharray="1 2.2" opacity=".6"/><path d="M258.9 335.9 L274.8 362.7" stroke="#d01818" stroke-width="1.4" /><path d="M283.1 376.7 L271.2 364.8 L278.3 360.6Z" fill="#f01010"/><ellipse cx="274.8" cy="362.7" rx="4.1" ry="2.2" fill="#f01010" transform="rotate(149.4 274.8 362.7)"/><path d="M270.0 317.5 L308.8 306.2" stroke="#28c818" stroke-width="1.4" /><path d="M329.3 300.2 L310.0 310.1 L307.7 302.2Z" fill="#20d818"/><ellipse cx="308.8" cy="306.2" rx="4.1" ry="2.2" fill="#20d818" transform="rotate(73.7 308.8 306.2)"/><path d="M251.3 308.3 L251.3 278.0" stroke="#1010d8" stroke-width="1.4" /><path d="M251.3 262.0 L255.4 278.0 L247.2 278.0Z" fill="#0c0cf0"/><ellipse cx="251.3" cy="278.0" rx="4.1" ry="2.2" fill="#0c0cf0" transform="rotate(0.0 251.3 278.0)"/><g transform="translate(251.3 323.0)" fill="none"><circle r="14.8" stroke="#fff" stroke-width="1.2"/><circle r="9.7" stroke="#e03030" stroke-width="1.2"/><circle r="9.7" stroke="#fff" stroke-width="1.2" stroke-dasharray="3.8 3.8" opacity=".75"/><path d="M-20.5 0 H-5.5 M5.5 0 H20.5 M0 -20.5 V-5.5 M0 5.5 V20.5" stroke="#000" stroke-width="1.3"/><rect x="-3" y="-3" width="6" height="6" fill="#f5a560" stroke="#1a1000" stroke-width="1"/></g><g transform="translate(25.8 620.3)" stroke-width="2" fill="none"><path d="M0 0 L10.9 14.8" stroke="#c02020"/><path d="M0 0 L22.6 -7" stroke="#20c020"/><path d="M0 0 V-18" stroke="#2020e0"/></g></svg>
<div class="a" style="left:855px;top:58px;width:1px;height:646px;background:#2a2a2a;"></div>
<span class="t " style="left:875px;top:70.0px;font-size:11.25px;color:#fff;">User Ortho</span>
<span class="t " style="left:925px;top:685.0px;font-size:11.25px;color:#fff;">(1) Cube</span>
<span class="t " style="left:884px;top:647.8px;font-size:10.25px;color:#3838d0;">z</span>
<span class="t " style="left:906.5px;top:659.8px;font-size:10.25px;color:#30a830;">y</span>
<span class="t " style="left:894px;top:681.8px;font-size:10.25px;color:#a83030;">x</span>
<div class="a" style="left:1345px;top:80px;width:13px;height:13px;background:#2c2c2c;border-radius:3px;opacity:.9"></div>
<svg style="left:1347px;top:82px;" width="9" height="9" viewBox="0 0 9 9"><path d="M4.5 1 V8 M1 4.5 H8" stroke="#8a8a8a" stroke-width="2"/></svg>
<svg style="left:1344px;top:58px;" width="13" height="13" viewBox="0 0 13 13"><path d="M2 0 L13 11" stroke="#333" stroke-width="1"/><path d="M3 0 L13 10" stroke="#9a9a9a" stroke-width="1"/><path d="M6 0 L13 7" stroke="#333" stroke-width="1"/><path d="M7 0 L13 6" stroke="#9a9a9a" stroke-width="1"/><path d="M10 0 L13 3" stroke="#333" stroke-width="1"/><path d="M11 0 L13 2" stroke="#9a9a9a" stroke-width="1"/></svg>
<div class="a" style="left:8px;top:704px;width:687px;height:26px;background:#727272;"></div>
<div class="a" style="left:694px;top:704px;width:1px;height:26px;background:#111;"></div>
<div class="a" style="left:8px;top:704px;width:1350px;height:1px;background:#868686;"></div>
<svg style="left:8px;top:717px;" width="13" height="13" viewBox="0 0 13 13"><path d="M0 2 L11 13" stroke="#333" stroke-width="1"/><path d="M0 3 L10 13" stroke="#9a9a9a" stroke-width="1"/><path d="M0 6 L7 13" stroke="#333" stroke-width="1"/><path d="M0 7 L6 13" stroke="#9a9a9a" stroke-width="1"/><path d="M0 10 L3 13" stroke="#333" stroke-width="1"/><path d="M0 11 L2 13" stroke="#9a9a9a" stroke-width="1"/></svg>
<div class="w menu" style="left:17px;top:707px;width:31px;height:19.5px;border-radius:5px;"></div>
<svg style="left:21px;top:710px;" width="16" height="14" viewBox="0 0 16 14"><rect x=".5" y=".5" width="15" height="13" fill="#f4f4f4" stroke="#222"/><rect x="1.5" y="1.5" width="13" height="5" fill="#e2a0a8"/><circle cx="10" cy="4.5" r="1.6" fill="#fff3f0"/><rect x="1.5" y="6.5" width="13" height="3" fill="#3a3048"/><rect x="1.5" y="9.5" width="13" height="1.5" fill="#8f9ad0"/><rect x="2.5" y="11.7" width="9" height="1" fill="#444"/></svg>
<svg style="left:39px;top:711px;" width="7" height="13" viewBox="0 0 7 13"><path d="M3.5 0.5 L6.5 5 L0.5 5Z M3.5 12.5 L6.5 8 L0.5 8Z" fill="#b0b0b0"/></svg>
<span class="t " style="left:60.5px;top:712.8px;font-size:11.25px;color:#0a0a0a;">View</span>
<span class="t " style="left:104px;top:712.8px;font-size:11.25px;color:#0a0a0a;">Select</span>
<span class="t " style="left:155px;top:712.8px;font-size:11.25px;color:#0a0a0a;">Image</span>
<span class="t " style="left:206px;top:712.8px;font-size:11.25px;color:#0a0a0a;">UVs</span>
<div class="w menu" style="left:239px;top:707px;width:32px;height:19.5px;border-radius:5px 0 0 5px;"></div>
<div class="w tool" style="left:270px;top:707px;width:61px;height:19.5px;border-radius:0;"></div>
<div class="w tool" style="left:330px;top:707px;width:61px;height:19.5px;border-radius:0 5px 5px 0;"></div>
<svg style="left:244px;top:709px;" width="14" height="16" viewBox="0 0 14 16"><path d="M3.5 .5 H13.5 V15.5 H.5 V3.5Z" fill="#f6f6f6" stroke="#222"/><path d="M.5 3.5 H3.5 V.5" fill="#ccc" stroke="#222" stroke-width=".8"/><rect x="1.5" y="4.5" width="11" height="4.5" fill="#dba4b2"/><rect x="1.5" y="9" width="11" height="2.5" fill="#2e2a48"/><rect x="1.5" y="11.5" width="11" height="3" fill="#a8b0e0"/></svg>
<svg style="left:261px;top:711px;" width="7" height="13" viewBox="0 0 7 13"><path d="M3.5 0.5 L6.5 5 L0.5 5Z M3.5 12.5 L6.5 8 L0.5 8Z" fill="#b0b0b0"/></svg>
<svg style="left:275.5px;top:711px;" width="12" height="12" viewBox="0 0 12 12"><path d="M6 1 V11 M1 6 H11" stroke="#111" stroke-width="3.6" stroke-linecap="square"/><path d="M6 1.5 V10.5 M1.5 6 H10.5" stroke="#fff" stroke-width="2"/></svg>
<span class="t " style="left:297px;top:712.8px;font-size:11.25px;color:#000;">New</span>
<svg style="left:334px;top:709px;" width="16" height="15" viewBox="0 0 16 15"><path d="M1 4.5 H5.5 L7 6 H13.5 V14 H1Z" fill="#d9d08a" stroke="#3a3a20" stroke-width=".9"/><rect x="6" y="1" width="7.5" height="7" fill="#f2f2f2" stroke="#333" stroke-width=".8"/><path d="M7.5 3 H12 M7.5 5 H12" stroke="#6a86c0" stroke-width="1"/><path d="M1 14 L3 8 H15.5 L13.5 14Z" fill="#e6dfa0" stroke="#3a3a20" stroke-width=".9"/></svg>
<span class="t " style="left:355.5px;top:712.8px;font-size:11.25px;color:#000;">Open</span>
<div class="w tool" style="left:396.5px;top:707px;width:20px;height:19.5px;border-radius:5px;"></div>
<svg style="left:398px;top:708px;" width="17" height="17" viewBox="0 0 17 17"><path d="M2 15.5 L7.2 9.6" stroke="#1a1a1a" stroke-width="2.6" stroke-linecap="round"/><path d="M2 15.5 L7.2 9.6" stroke="#e6e6e6" stroke-width="1.2" stroke-linecap="round"/><path d="M9.2 1.8 L15.2 7.8 L13.6 9 L12 8.4 L9.8 10.6 L10 13.2 L8.6 14 L3.2 8.4 L4 7 L6.4 7.2 L8.6 5 L8 3.4Z" fill="#eaeaea" stroke="#1a1a1a" stroke-width="1.1" stroke-linejoin="round"/></svg>
<div class="w menu" style="left:421px;top:707px;width:66px;height:19.5px;border-radius:5px;"></div>
<svg style="left:426.5px;top:709px;" width="14" height="16" viewBox="0 0 14 16"><path d="M3.5 .5 H13.5 V15.5 H.5 V3.5Z" fill="#f6f6f6" stroke="#222"/><path d="M.5 3.5 H3.5 V.5" fill="#ccc" stroke="#222" stroke-width=".8"/><rect x="1.5" y="4.5" width="11" height="4.5" fill="#dba4b2"/><rect x="1.5" y="9" width="11" height="2.5" fill="#2e2a48"/><rect x="1.5" y="11.5" width="11" height="3" fill="#a8b0e0"/></svg>
<span class="t " style="left:445px;top:712.8px;font-size:11.25px;color:#fff;">View</span>
<svg style="left:477.5px;top:711px;" width="7" height="13" viewBox="0 0 7 13"><path d="M3.5 0.5 L6.5 5 L0.5 5Z M3.5 12.5 L6.5 8 L0.5 8Z" fill="#b0b0b0"/></svg>
<div class="w menu" style="left:492px;top:707px;width:35px;height:19.5px;border-radius:5px;"></div>
<svg style="left:497px;top:709px;" width="16" height="16" viewBox="0 0 16 16"><path d="M1 5 V1 H5 M11 1 H15 V5 M15 11 V15 H11 M5 15 H1 V11" fill="none" stroke="#fff" stroke-width="1.6"/><circle cx="8" cy="8" r="2.6" fill="#5a8ae0" stroke="#e8f0ff" stroke-width="1"/></svg>
<svg style="left:517.5px;top:711px;" width="7" height="13" viewBox="0 0 7 13"><path d="M3.5 0.5 L6.5 5 L0.5 5Z M3.5 12.5 L6.5 8 L0.5 8Z" fill="#b0b0b0"/></svg>
<div class="w tool" style="left:532px;top:707px;width:19px;height:19.5px;border-radius:5px;background:linear-gradient(#bdbdbd,#a0a0a0)"></div>
<svg style="left:534px;top:709px;" width="16" height="16" viewBox="0 0 16 16"><path d="M3 4.5 L8 2.5 L12 4.5 V11 L8 13.5 L3 11Z" fill="#e9e9e9" stroke="#777" stroke-width=".8"/><path d="M3 4.5 L8 7 L12 4.5 M8 7 V13.5" stroke="#999" stroke-width=".8" fill="none"/><rect x="1.5" y="3" width="3" height="3" fill="#f0a040" stroke="#7a4a10" stroke-width=".7"/><rect x="1.5" y="9.5" width="3" height="3" fill="#f0a040" stroke="#7a4a10" stroke-width=".7"/><rect x="6.5" y="1" width="3" height="3" fill="#f0a040" stroke="#7a4a10" stroke-width=".7"/></svg>
<svg style="left:540px;top:710px;" width="11" height="16" viewBox="0 0 11 16"><path d="M1 1 V12.5 L3.8 10 L5.8 14.6 L7.8 13.7 L5.8 9.3 L9.4 9.1Z" fill="#fff" stroke="#000" stroke-width="1"/></svg>
<div class="w menu sel" style="left:556px;top:707px;width:21px;height:19.5px;border-radius:5px 0 0 5px;"></div>
<div class="w menu" style="left:576px;top:707px;width:21px;height:19.5px;border-radius:0;"></div>
<div class="w menu" style="left:596px;top:707px;width:21px;height:19.5px;border-radius:0;"></div>
<div class="w menu" style="left:616px;top:707px;width:20px;height:19.5px;border-radius:0 5px 5px 0;"></div>
<svg style="left:558px;top:709px;" width="16" height="16" viewBox="0 0 16 16"><path d="M2.5 2.5 H13.5 V13.5 H2.5Z M8 2.5 V13.5 M2.5 8 H13.5" fill="none" stroke="#2c3c58" stroke-width="1"/><rect x="1.5" y="1.5" width="3.4" height="3.4" fill="#f6a63c" stroke="#3a2408" stroke-width=".7"/><rect x="1.5" y="6.5" width="3.4" height="3.4" fill="#f6a63c" stroke="#3a2408" stroke-width=".7"/><rect x="1.5" y="11.5" width="3.4" height="3.4" fill="#f6a63c" stroke="#3a2408" stroke-width=".7"/><rect x="11.5" y="1.5" width="3.4" height="3.4" fill="#f6a63c" stroke="#3a2408" stroke-width=".7"/><rect x="11.5" y="6.5" width="3.4" height="3.4" fill="#f6a63c" stroke="#3a2408" stroke-width=".7"/><rect x="11.5" y="11.5" width="3.4" height="3.4" fill="#f6a63c" stroke="#3a2408" stroke-width=".7"/><rect x="6.5" y="1.5" width="3.4" height="3.4" fill="#f6a63c" stroke="#3a2408" stroke-width=".7"/></svg>
<svg style="left:578px;top:709px;" width="16" height="16" viewBox="0 0 16 16"><path d="M3.5 2 V14 M8 2 V14 M12.5 2 V14" stroke="#a8683a" stroke-width="1.6"/><path d="M2 3.5 H14 M2 12.5 H14" stroke="#4a4a4a" stroke-width="1"/></svg>
<svg style="left:598px;top:709px;" width="16" height="16" viewBox="0 0 16 16"><rect x="2" y="2" width="12" height="12" fill="#555" stroke="#333"/><rect x="2" y="2" width="7" height="7" fill="#d89a58" stroke="#6a4420" stroke-width=".8"/></svg>
<svg style="left:618px;top:709px;" width="16" height="16" viewBox="0 0 16 16"><rect x="2" y="2.5" width="5" height="11" fill="#6a6a6a" stroke="#333" stroke-width=".8"/><rect x="8.5" y="2.5" width="5.5" height="11" fill="#d89a58" stroke="#6a4420" stroke-width=".8"/></svg>
<div class="w menu" style="left:642px;top:707px;width:36px;height:19.5px;border-radius:5px;"></div>
<svg style="left:647px;top:709px;" width="16" height="16" viewBox="0 0 16 16"><rect x="1.5" y="1.5" width="13" height="13" fill="none" stroke="#eee" stroke-width="1" stroke-dasharray="1 1"/><circle cx="8" cy="6" r="1.7" fill="#fff" stroke="#000" stroke-width=".8"/><circle cx="5.6" cy="10" r="1.7" fill="#fff" stroke="#000" stroke-width=".8"/><circle cx="10.4" cy="10" r="1.7" fill="#fff" stroke="#000" stroke-width=".8"/></svg>
<svg style="left:667.5px;top:711px;" width="7" height="13" viewBox="0 0 7 13"><path d="M3.5 0.5 L6.5 5 L0.5 5Z M3.5 12.5 L6.5 8 L0.5 8Z" fill="#b0b0b0"/></svg>
<div class="a" style="left:682px;top:707px;width:12px;height:20px;overflow:hidden"><div class="w menu" style="left:0;top:0;width:30px;height:19px;border-radius:5px"></div><svg style="left:4px;top:3px" width="16" height="13" viewBox="0 0 16 13"><circle cx="8" cy="7" r="5.5" fill="none" stroke="#9a9a9a" stroke-width="1.6"/></svg></div>
<div class="a" style="left:695px;top:704px;width:663px;height:26px;background:#727272;"></div>
<div class="a" style="left:695px;top:704px;width:663px;height:1px;background:#868686;"></div>
<svg style="left:695px;top:717px;" width="13" height="13" viewBox="0 0 13 13"><path d="M0 2 L11 13" stroke="#333" stroke-width="1"/><path d="M0 3 L10 13" stroke="#9a9a9a" stroke-width="1"/><path d="M0 6 L7 13" stroke="#333" stroke-width="1"/><path d="M0 7 L6 13" stroke="#9a9a9a" stroke-width="1"/><path d="M0 10 L3 13" stroke="#333" stroke-width="1"/><path d="M0 11 L2 13" stroke="#9a9a9a" stroke-width="1"/></svg>
<div class="w menu" style="left:704.5px;top:707px;width:30px;height:19.5px;border-radius:5px;"></div>
<svg style="left:708px;top:709px;" width="16" height="16" viewBox="0 0 16 16"><path d="M2 4 L8.5 2 L14 4 V11.5 L8 14.5 L2 11.5Z" fill="#f4f4f4" stroke="#444" stroke-width=".8"/><path d="M8 6.2 L14 4 V11.5 L8 14.5Z" fill="#9c9c9c"/><path d="M2 4 L8 6.2 V14.5 L2 11.5Z" fill="#e2e2e2"/></svg>
<svg style="left:725.5px;top:711px;" width="7" height="13" viewBox="0 0 7 13"><path d="M3.5 0.5 L6.5 5 L0.5 5Z M3.5 12.5 L6.5 8 L0.5 8Z" fill="#b0b0b0"/></svg>
<span class="t " style="left:747.5px;top:712.8px;font-size:11.25px;color:#0a0a0a;">View</span>
<span class="t " style="left:791px;top:712.8px;font-size:11.25px;color:#0a0a0a;">Select</span>
<span class="t " style="left:842px;top:712.8px;font-size:11.25px;color:#0a0a0a;">Add</span>
<span class="t " style="left:880.5px;top:712.8px;font-size:11.25px;color:#0a0a0a;">Mesh</span>
<div class="w menu" style="left:920px;top:707px;width:99px;height:19.5px;border-radius:5px;"></div>
<svg style="left:925px;top:709px;" width="16" height="16" viewBox="0 0 16 16"><path d="M3 4.5 L8.5 2.5 L13 4.5 V11 L8 13.5 L3 11Z" fill="#b9b9b9" stroke="#555" stroke-width=".8"/><path d="M3 4.5 L8 6.8 L13 4.5 M8 6.8 V13.5" stroke="#777" stroke-width=".8" fill="none"/><rect x="1.5" y="3.0" width="3.2" height="3.2" fill="#f6a63c" stroke="#5a3408" stroke-width=".7"/><rect x="7.0" y="1.0" width="3.2" height="3.2" fill="#f6a63c" stroke="#5a3408" stroke-width=".7"/><rect x="1.5" y="9.5" width="3.2" height="3.2" fill="#f6a63c" stroke="#5a3408" stroke-width=".7"/><rect x="6.5" y="12.0" width="3.2" height="3.2" fill="#f6a63c" stroke="#5a3408" stroke-width=".7"/><rect x="6.5" y="5.5" width="3.2" height="3.2" fill="#f6a63c" stroke="#5a3408" stroke-width=".7"/></svg>
<span class="t " style="left:944.5px;top:712.8px;font-size:11.25px;color:#fff;">Edit Mode</span>
<svg style="left:1009px;top:711px;" width="7" height="13" viewBox="0 0 7 13"><path d="M3.5 0.5 L6.5 5 L0.5 5Z M3.5 12.5 L6.5 8 L0.5 8Z" fill="#b0b0b0"/></svg>
<div class="w menu" style="left:1024px;top:707px;width:35px;height:19.5px;border-radius:5px;"></div>
<svg style="left:1028px;top:709px;" width="16" height="16" viewBox="0 0 16 16"><defs><radialGradient id="sph" cx=".4" cy=".35" r=".7"><stop offset="0" stop-color="#fff"/><stop offset=".7" stop-color="#e4e4e4"/><stop offset="1" stop-color="#9a9a9a"/></radialGradient></defs><circle cx="8" cy="8" r="6.5" fill="url(#sph)" stroke="#333" stroke-width=".6"/></svg>
<svg style="left:1049px;top:711px;" width="7" height="13" viewBox="0 0 7 13"><path d="M3.5 0.5 L6.5 5 L0.5 5Z M3.5 12.5 L6.5 8 L0.5 8Z" fill="#b0b0b0"/></svg>
<div class="w menu" style="left:1064px;top:707px;width:35px;height:19.5px;border-radius:5px;"></div>
<svg style="left:1068px;top:709px;" width="17" height="16" viewBox="0 0 17 16"><circle cx="6" cy="5.5" r="4.3" fill="#f1f1f1" stroke="#333" stroke-width=".7"/><circle cx="11" cy="10.5" r="4.3" fill="#f1f1f1" stroke="#333" stroke-width=".7"/><rect x="6.5" y="6" width="4" height="4" fill="#5a9af0" stroke="#123a7a" stroke-width=".9"/></svg>
<svg style="left:1089px;top:711px;" width="7" height="13" viewBox="0 0 7 13"><path d="M3.5 0.5 L6.5 5 L0.5 5Z M3.5 12.5 L6.5 8 L0.5 8Z" fill="#b0b0b0"/></svg>
<div class="w menu" style="left:1104px;top:707px;width:20px;height:19.5px;border-radius:5px 0 0 5px;"></div>
<div class="w menu sel" style="left:1123px;top:707px;width:21px;height:19.5px;border-radius:0;"></div>
<div class="w menu" style="left:1143px;top:707px;width:21px;height:19.5px;border-radius:0;"></div>
<div class="w menu" style="left:1163px;top:707px;width:21px;height:19.5px;border-radius:0;"></div>
<div class="w menu" style="left:1183px;top:707px;width:73px;height:19.5px;border-radius:0 5px 5px 0;"></div>
<svg style="left:1106px;top:709px;" width="16" height="16" viewBox="0 0 16 16"><path d="M8 9.5 V1.5" stroke="#3a6af0" stroke-width="2"/><path d="M8 9.5 L1.5 14" stroke="#e03030" stroke-width="2"/><path d="M8 9.5 L14.5 14" stroke="#50d040" stroke-width="2"/><circle cx="8" cy="9.5" r="1.3" fill="#fff"/></svg>
<svg style="left:1126px;top:709px;" width="16" height="16" viewBox="0 0 16 16"><path d="M2.5 13.5 L12 4" stroke="#14306a" stroke-width="3"/><path d="M2.5 13.5 L12 4" stroke="#5c8cf0" stroke-width="1.5"/><path d="M14.5 1.5 L13.6 8 L8 2.4Z" fill="#3a6ae0" stroke="#14306a" stroke-width=".9"/></svg>
<svg style="left:1146px;top:709px;" width="16" height="16" viewBox="0 0 16 16"><path d="M2.5 14 C2.5 7.5 7 3 14 3" fill="none" stroke="#4a6a9a" stroke-width="2.2"/></svg>
<svg style="left:1166px;top:709px;" width="16" height="16" viewBox="0 0 16 16"><path d="M2.5 13.5 L10 6" stroke="#4a5f8a" stroke-width="2.2"/><rect x="8.5" y="2" width="5.5" height="5.5" fill="#5876b0" stroke="#2a3c60" stroke-width=".8"/></svg>
<span class="t " style="left:1190.5px;top:712.8px;font-size:11.25px;color:#fff;">Global</span>
<svg style="left:1246px;top:711px;" width="7" height="13" viewBox="0 0 7 13"><path d="M3.5 0.5 L6.5 5 L0.5 5Z M3.5 12.5 L6.5 8 L0.5 8Z" fill="#b0b0b0"/></svg>
<div class="w tool" style="left:1261.5px;top:707px;width:20px;height:19.5px;border-radius:5px 0 0 5px;background:linear-gradient(#b8b8b8,#a0a0a0)"></div>
<div class="w tool" style="left:1280.5px;top:707px;width:21px;height:19.5px;border-radius:0;background:linear-gradient(#7c7c7c,#686868)"></div>
<div class="w tool" style="left:1300.5px;top:707px;width:20px;height:19.5px;border-radius:0 5px 5px 0;background:linear-gradient(#b8b8b8,#a0a0a0)"></div>
<svg style="left:1263.5px;top:709px;" width="16" height="16" viewBox="0 0 16 16"><path d="M3 5 L8.5 3 L13.5 5 V11.5 L8 14 L3 11.5Z" fill="#c4c8cc" stroke="#7a7a7a" stroke-width=".8"/><path d="M8 7 L13.5 5 V11.5 L8 14Z" fill="#9aa0a6"/><path d="M3 5 L8 7 V14 L3 11.5Z" fill="#d4d8dc"/><rect x="1.5" y="3.5" width="3" height="3" fill="#f0b060" stroke="#6a4410" stroke-width=".7"/></svg>
<svg style="left:1283px;top:709px;" width="16" height="16" viewBox="0 0 16 16"><path d="M3 5 L8.5 3 L13.5 5 V11.5 L8 14 L3 11.5Z" fill="#c4c8cc" stroke="#7a7a7a" stroke-width=".8"/><path d="M8 7 L13.5 5 V11.5 L8 14Z" fill="#9aa0a6"/><path d="M3 5 L8 7 V14 L3 11.5Z" fill="#d4d8dc"/><path d="M2.5 5 V12" stroke="#ffb050" stroke-width="2.2"/><path d="M2.5 5 V12" stroke="#fff" stroke-width=".8"/></svg>
<svg style="left:1302.5px;top:709px;" width="16" height="16" viewBox="0 0 16 16"><path d="M3 5 L8.5 3 L13.5 5 V11.5 L8 14 L3 11.5Z" fill="#c4c8cc" stroke="#7a7a7a" stroke-width=".8"/><path d="M8 7 L13.5 5 V11.5 L8 14Z" fill="#9aa0a6"/><path d="M3 5 L8 7 V14 L3 11.5Z" fill="#d4d8dc"/><path d="M3 5 L8 7 V14 L3 11.5Z" fill="#f2b870" stroke="#9a6420" stroke-width=".8"/></svg>
<div class="w tool" style="left:1326.5px;top:707px;width:19px;height:19.5px;border-radius:5px;background:linear-gradient(#b0b0b0,#989898)"></div>
<svg style="left:1328px;top:709px;" width="16" height="16" viewBox="0 0 16 16"><rect x="3.5" y="7" width="6.5" height="6.5" fill="#dcdcdc" stroke="#999" stroke-width=".6"/><circle cx="3" cy="6.5" r="1.9" fill="#fff" stroke="#000" stroke-width="1.3"/><circle cx="10" cy="6.5" r="1.9" fill="#fff" stroke="#000" stroke-width="1.3"/><circle cx="3" cy="13.5" r="1.9" fill="#fff" stroke="#000" stroke-width="1.3"/><circle cx="10" cy="13.5" r="1.9" fill="#fff" stroke="#000" stroke-width="1.3"/><circle cx="6.5" cy="2.5" r="1.5" fill="#f2f2f2" stroke="#9a9a9a" stroke-width=".8"/><circle cx="13.5" cy="2.5" r="1.5" fill="#f2f2f2" stroke="#9a9a9a" stroke-width=".8"/><circle cx="13.5" cy="9.5" r="1.5" fill="#f2f2f2" stroke="#9a9a9a" stroke-width=".8"/></svg>
<div class="a" style="left:1351px;top:707px;width:7px;height:20px;overflow:hidden"><div class="w menu" style="left:0;top:0;width:30px;height:19px;border-radius:5px"></div></div>
<div class="a" style="left:0px;top:738px;width:1366px;height:30px;background:#1f1f21;"></div>
<div class="a" style="left:148px;top:766px;width:24px;height:2px;background:#f3e3b0;"></div>
<svg style="left:0;top:0" width="1366" height="768" viewBox="0 0 1366 768"><path d="M10 747.3 L17 746.3 V752.6 H10Z M18 746.1 L26.3 745 V752.6 H18Z M10 753.6 H17 V760 L10 759Z M18 753.6 H26.3 V761.3 L18 760.2Z" fill="#fff"/><circle cx="55.5" cy="750" r="5.3" fill="none" stroke="#fff" stroke-width="1.4"/><path d="M51.8 753.8 L46 760.5" stroke="#fff" stroke-width="1.6"/><rect x="83.5" y="746.5" width="12.5" height="13" fill="none" stroke="#fff" stroke-width="1.3"/><path d="M81.8 748.5 H80.2 V757.5 H81.8 M97.7 748.5 H99.3 V757.5 H97.7" fill="none" stroke="#fff" stroke-width="1.2"/><path d="M118 746 H124 L125.5 748 H134 V759.5 H118Z" fill="#f3d060"/><path d="M118 750 H134 V759.5 H118Z" fill="#fbe48a"/><rect x="122" y="754.5" width="8" height="5" fill="#3d9ae0"/><rect x="124" y="756.5" width="4" height="3" fill="#f3d060"/><circle cx="160.4" cy="752" r="6.6" fill="#2a5fc0"/><circle cx="162" cy="749.6" r="3" fill="#4f8ee8"/><path d="M152.4 752.5 C152 748.5 153.6 746.2 155.6 745.2 C155 747 155.6 748 156.6 748.6 C158 747 160 746.6 161.4 747 C159.4 748 159.4 750 161 750.8 C163.4 751.6 164.4 753 163.6 755 C162.6 757 159.6 757.4 157.8 756 C159.6 758.6 164 758.6 166.4 755.4 C167.6 753.6 167.8 751.4 167.4 750 C168.8 753 168 757 165 759 C161.6 761.2 157 760.6 154.4 758 C152.8 756.4 152.4 754.4 152.4 752.5Z" fill="#f08a1c"/><path d="M152.4 752.5 C152 748.5 153.6 746.2 155.6 745.2 C155 747 155.6 748 156.6 748.6 C155 750 154.6 753 156 755.6 C154 755 152.6 754 152.4 752.5Z" fill="#f8c030"/><rect x="185.5" y="745" width="16" height="15.5" rx="1.5" fill="#c01414"/><text x="187.1" y="757.6" font-family="Liberation Sans,sans-serif" font-size="12" font-weight="bold" font-style="italic" fill="#fff">Fz</text><path d="M224.8 745.9 L228.5 748.3 L224.8 750.6999999999999 L221.10000000000002 748.3Z" fill="#1f8ce6"/><path d="M232.2 745.9 L235.89999999999998 748.3 L232.2 750.6999999999999 L228.5 748.3Z" fill="#1f8ce6"/><path d="M224.8 750.6 L228.5 753.0 L224.8 755.4 L221.10000000000002 753.0Z" fill="#1f8ce6"/><path d="M232.2 750.6 L235.89999999999998 753.0 L232.2 755.4 L228.5 753.0Z" fill="#1f8ce6"/><path d="M224.9 757.2 L228.5 759.6 L232.1 757.2 L228.5 755.2Z" fill="#1f8ce6"/><path d="M259 745.5 H265 L270.5 755 H264.5Z" fill="#f7c52c"/><path d="M259 745.5 L262 750.6 L256.6 760 L253.5 755Z" fill="#23a566"/><path d="M256.6 760 L259.6 755 H270.5 L267.6 760Z" fill="#3a78e0"/><circle cx="296" cy="752.5" r="8" fill="#16305a"/><path d="M288 752 L295 755 L297.5 758.5 L292 759.6 C289 758 288 755 288 752Z" fill="#e8eef6"/><circle cx="298.6" cy="750" r="3" fill="none" stroke="#e8eef6" stroke-width="1.4"/><circle cx="293.8" cy="756" r="2.2" fill="#e8eef6"/><path d="M288 753 Q296 764 303.6 755 Q298 763 291 759Z" fill="#2a6fb8"/><path d="M325 750 H335 L333.6 760 H326.4Z" fill="#f3ece6"/><path d="M326 750 L327.1 760" stroke="#d8262c" stroke-width="1.5"/><path d="M328.6 750 L329.05 760" stroke="#d8262c" stroke-width="1.5"/><path d="M331.4 750 L331.15000000000003 760" stroke="#d8262c" stroke-width="1.5"/><path d="M334 750 L333.1 760" stroke="#d8262c" stroke-width="1.5"/><circle cx="327" cy="748" r="2.6" fill="#f4efe8"/><circle cx="331" cy="746.6" r="2.8" fill="#fbf8f2"/><circle cx="334" cy="748.4" r="2.3" fill="#efe8de"/><circle cx="364" cy="753" r="7.6" fill="#12124a"/><rect x="360" y="751" width="8" height="6.6" rx="1.5" fill="#f0a818"/><path d="M358.4 754 C358.4 745 369.6 745 369.6 754" fill="none" stroke="#f0c030" stroke-width="1.3"/><path d="M397.5 745 L402.1 757 H392.9Z" fill="#f58a12"/><path d="M395.6 749.6 H399.4 L400.4 752.4 H394.6Z" fill="#fff"/><path d="M390.9 757 H404.1 L404.9 760.4 H390.1Z" fill="#f58a12"/><circle cx="429.6" cy="749.5" r="5.6" fill="#18a8ea"/><circle cx="434.4" cy="755.5" r="5.6" fill="#18a8ea"/><circle cx="432" cy="752.5" r="6.8" fill="#28b4f2"/><text x="428.4" y="757" font-family="Liberation Sans,sans-serif" font-size="12" font-weight="bold" fill="#fff">S</text><rect x="460" y="744.8" width="12" height="16" rx="1" fill="#fff"/><rect x="461.8" y="746.6" width="8.4" height="2.6" fill="#222"/><rect x="461.8" y="751.0" width="1.9" height="1.5" fill="#222"/><rect x="461.8" y="753.7" width="1.9" height="1.5" fill="#222"/><rect x="461.8" y="756.4" width="1.9" height="1.5" fill="#222"/><rect x="465.0" y="751.0" width="1.9" height="1.5" fill="#222"/><rect x="465.0" y="753.7" width="1.9" height="1.5" fill="#222"/><rect x="465.0" y="756.4" width="1.9" height="1.5" fill="#222"/><rect x="468.2" y="751.0" width="1.9" height="1.5" fill="#222"/><rect x="468.2" y="753.7" width="1.9" height="1.5" fill="#222"/><rect x="468.2" y="756.4" width="1.9" height="1.5" fill="#222"/><path d="M494.5 747 H506.5 V760 H493.1Z" fill="#a8dcea"/><rect x="494.5" y="745.6" width="12" height="2.6" fill="#e8f4f8"/><path d="M495.5 744.6 V747.6" stroke="#777" stroke-width="1"/><path d="M498.0 744.6 V747.6" stroke="#777" stroke-width="1"/><path d="M500.5 744.6 V747.6" stroke="#777" stroke-width="1"/><path d="M503.0 744.6 V747.6" stroke="#777" stroke-width="1"/><path d="M505.5 744.6 V747.6" stroke="#777" stroke-width="1"/><path d="M496.1 751 H504.9 M496.1 753.4 H504.9 M496.1 755.8 H504.9" stroke="#7fbfd0" stroke-width=".8"/><path d="M528.5 745 H536.5 L540.5 749 V760.4 H528.5Z" fill="#f2f2f2"/><path d="M536.5 745 L540.5 749 H536.5Z" fill="#8a8a8a"/><rect x="562" y="745.4" width="4" height="6" fill="#2c6fd8"/><path d="M562 751 H567 V760 H562Z" fill="#16a04a"/><path d="M566 749 H571.6 Q575.4 749 575.4 752 L571 756.6 H566Z" fill="#24c45c"/><rect x="594.5" y="746" width="14" height="13.4" rx="1.4" fill="#e9e9e9"/><rect x="595.9" y="747" width="11.2" height="8.2" fill="#3a3a3a"/><text x="598.5" y="754.6" font-family="Liberation Sans,sans-serif" font-size="9" font-weight="bold" fill="#f59a1a">S</text><rect x="594.5" y="760.2" width="14" height="1.1" fill="#ddd"/><path d="M641 746 H635 C627 746 627 759 635 759 H638 V752.4 H634" fill="none" stroke="#1a56b0" stroke-width="2"/><path d="M642 749.4 H636 C632 749.4 632 755.6 636 755.6" fill="none" stroke="#2468c8" stroke-width="1.4"/></svg>
<svg style="left:661px;top:746px;" width="17" height="13.8125" viewBox="0 0 16 13"><path d="M1 7.2 L7.2 2.3 L5.6 2.3 L6.6 1 L9 1 L14.3 5.2 C15.6 6.4 15.6 8.6 14.3 10 C12.6 11.8 9 11.9 7 10.2 C6.3 9.6 5.9 8.9 5.8 8.2 L3.2 10.2 L1.2 10.2 L4.6 7.5 L1 7.5Z" fill="#ea7600"/><circle cx="10.2" cy="7.4" r="3.1" fill="#fff"/><circle cx="10.3" cy="7.4" r="1.75" fill="#0d4a8c"/></svg>
<svg style="left:0;top:0" width="1366" height="768" viewBox="0 0 1366 768"><path d="M697 751 L703 745 L709 750 L705 760 L699 758Z" fill="#2a7be0"/><path d="M699 753 L705 756 L705 760 L699 758Z" fill="#9fd0ff"/><path d="M703 745 L709 750 L705 756 L701 750Z" fill="#f2f6fa" opacity=".85"/><path d="M706 752 L712 760 M712 752 L706 760" stroke="#e8c860" stroke-width="1.2"/><path d="M731 751 L737 745 L743 750 L739 760 L733 758Z" fill="#1e9a34"/><path d="M733 753 L739 756 L739 760 L733 758Z" fill="#8fe09a"/><path d="M737 745 L743 750 L739 756 L735 750Z" fill="#f2f6fa" opacity=".85"/><path d="M740 752 L746 760 M746 752 L740 760" stroke="#e8c860" stroke-width="1.2"/><path d="M764.5 746 L773.5 745 L778.5 749 L774.5 760 L766.5 757Z" fill="#f4f6f8"/><path d="M764.5 746 L773.5 745 L770.5 751 L765.5 752Z" fill="#18a0c8"/><rect x="770.7" y="751" width="1.8" height="4.4" fill="#222"/><path d="M812.6 748.4 A7 7 0 1 0 812.6 757" fill="none" stroke="#1ca0e8" stroke-width="4.4"/><path d="M834 754 L842 750 L847 753 V757 L839 761 L834 758Z" fill="#b8c4e8"/><path d="M837 750 L843 745 L845 747 L840 753Z" fill="#eef0f4"/><rect x="839" y="751.6" width="5.4" height="3" fill="#f0e030"/><circle cx="873" cy="752.6" r="7" fill="#f0f0f8"/><path d="M866 752.6 A7 7 0 0 1 873 745.6 L873 752.6Z" fill="#e878d0"/><path d="M873 759.6 A7 7 0 0 1 866 752.6 L873 752.6Z" fill="#70c8f0"/><path d="M869 748.6 L877 756.6" stroke="#333" stroke-width="1.4"/><rect x="898" y="745" width="16" height="15" rx="1" fill="#0a5cc0"/><rect x="898" y="745" width="16" height="2" fill="#0a2c6a" opacity=".45"/><text x="906" y="757" text-anchor="middle" font-family="Liberation Sans,sans-serif" font-size="9.5" font-weight="bold" fill="#8fd0ff">Ps</text><rect x="931" y="745" width="16" height="15" rx="1" fill="#e07a0a"/><rect x="931" y="745" width="16" height="2" fill="#6a3400" opacity=".45"/><text x="939" y="757" text-anchor="middle" font-family="Liberation Sans,sans-serif" font-size="9.5" font-weight="bold" fill="#ffd890">Ai</text><rect x="964" y="745" width="16" height="15" rx="1" fill="#c01868"/><rect x="964" y="745" width="16" height="2" fill="#5a0830" opacity=".45"/><text x="972" y="757" text-anchor="middle" font-family="Liberation Sans,sans-serif" font-size="9.5" font-weight="bold" fill="#ffb0d8">ID</text><rect x="997" y="745" width="16" height="15" rx="1" fill="#c81c1c"/><rect x="997" y="745" width="16" height="2" fill="#600808" opacity=".45"/><text x="1005" y="757" text-anchor="middle" font-family="Liberation Sans,sans-serif" font-size="9.5" font-weight="bold" fill="#ffb8a8">Fl</text><rect x="1030" y="745" width="16" height="15" rx="1" fill="#585c8c"/><rect x="1030" y="745" width="16" height="2" fill="#262840" opacity=".45"/><text x="1038" y="757" text-anchor="middle" font-family="Liberation Sans,sans-serif" font-size="9.5" font-weight="bold" fill="#d8dcff">Ae</text><rect x="894" y="766" width="24" height="2" fill="#f3e3b0"/><rect x="1055" y="738" width="32" height="30" fill="#414143"/><rect x="1055" y="766" width="32" height="2" fill="#f3e3b0"/><path d="M1100.5 756 L1106 750.5 L1111.5 756" fill="none" stroke="#fff" stroke-width="1.3"/><rect x="1134.5" y="748.5" width="12" height="8" fill="none" stroke="#fff" stroke-width="1.2"/><rect x="1136" y="750" width="9" height="5" fill="#fff" opacity=".25"/><path d="M1130.5 748 V751 M1133 748 V751 M1129.8 751 H1133.8 V753.5 H1129.8Z M1131.8 753.5 V756.5" stroke="#fff" stroke-width="1" fill="#fff"/><path d="M1166 759.5 A10 10 0 0 1 1176 749.5 M1166 759.5 m3.3 0 A6.7 6.7 0 0 1 1176 752.8 M1172.6 759.5 A3.4 3.4 0 0 1 1176 756.1" fill="none" stroke="#fff" stroke-width="1.3"/><rect x="1174" y="757.5" width="3" height="3" fill="#fff"/><path d="M1195 750.5 H1197.5 L1201 747 V759 L1197.5 755.5 H1195Z" fill="none" stroke="#fff" stroke-width="1.1"/><path d="M1203.5 750.5 Q1205.5 753 1203.5 755.5" fill="none" stroke="#fff" stroke-width="1"/><path d="M1205.8 748.6 Q1209 753 1205.8 757.4" fill="none" stroke="#aaa" stroke-width="1"/><path d="M1208 747 Q1212.4 753 1208 759" fill="none" stroke="#666" stroke-width="1"/><path d="M1226.5 745.5 H1241 V757 H1233 V758.5 H1226.5Z" fill="#fff"/><path d="M1229 748.5 H1238.5 M1229 751 H1238.5 M1229 753.5 H1235" stroke="#1f1f21" stroke-width="1"/><circle cx="1238" cy="757" r="3.8" fill="#1f1f21" stroke="#fff" stroke-width="1.1"/><path d="M1236 757 H1240" stroke="#fff" stroke-width="1.1"/><rect x="1254.5" y="746.5" width="22" height="12" rx="1" fill="none" stroke="#fff" stroke-width="1.2"/><path d="M1257 749.5 H1274 M1257 752 H1274" stroke="#fff" stroke-width="1" stroke-dasharray="1.4 1"/><path d="M1259.5 755.5 H1271.5" stroke="#fff" stroke-width="1"/><rect x="1361" y="738" width="1" height="30" fill="#555"/></svg>
<svg style="left:1062px;top:746px;" width="17" height="13.8125" viewBox="0 0 16 13"><path d="M1 7.2 L7.2 2.3 L5.6 2.3 L6.6 1 L9 1 L14.3 5.2 C15.6 6.4 15.6 8.6 14.3 10 C12.6 11.8 9 11.9 7 10.2 C6.3 9.6 5.9 8.9 5.8 8.2 L3.2 10.2 L1.2 10.2 L4.6 7.5 L1 7.5Z" fill="#ea7600"/><circle cx="10.2" cy="7.4" r="3.1" fill="#fff"/><circle cx="10.3" cy="7.4" r="1.75" fill="#0d4a8c"/></svg>
<span class="t seg" style="left:1308.5px;top:745.8px;font-size:12px;color:#fff;">15:51</span>
</div>
</body></html>
